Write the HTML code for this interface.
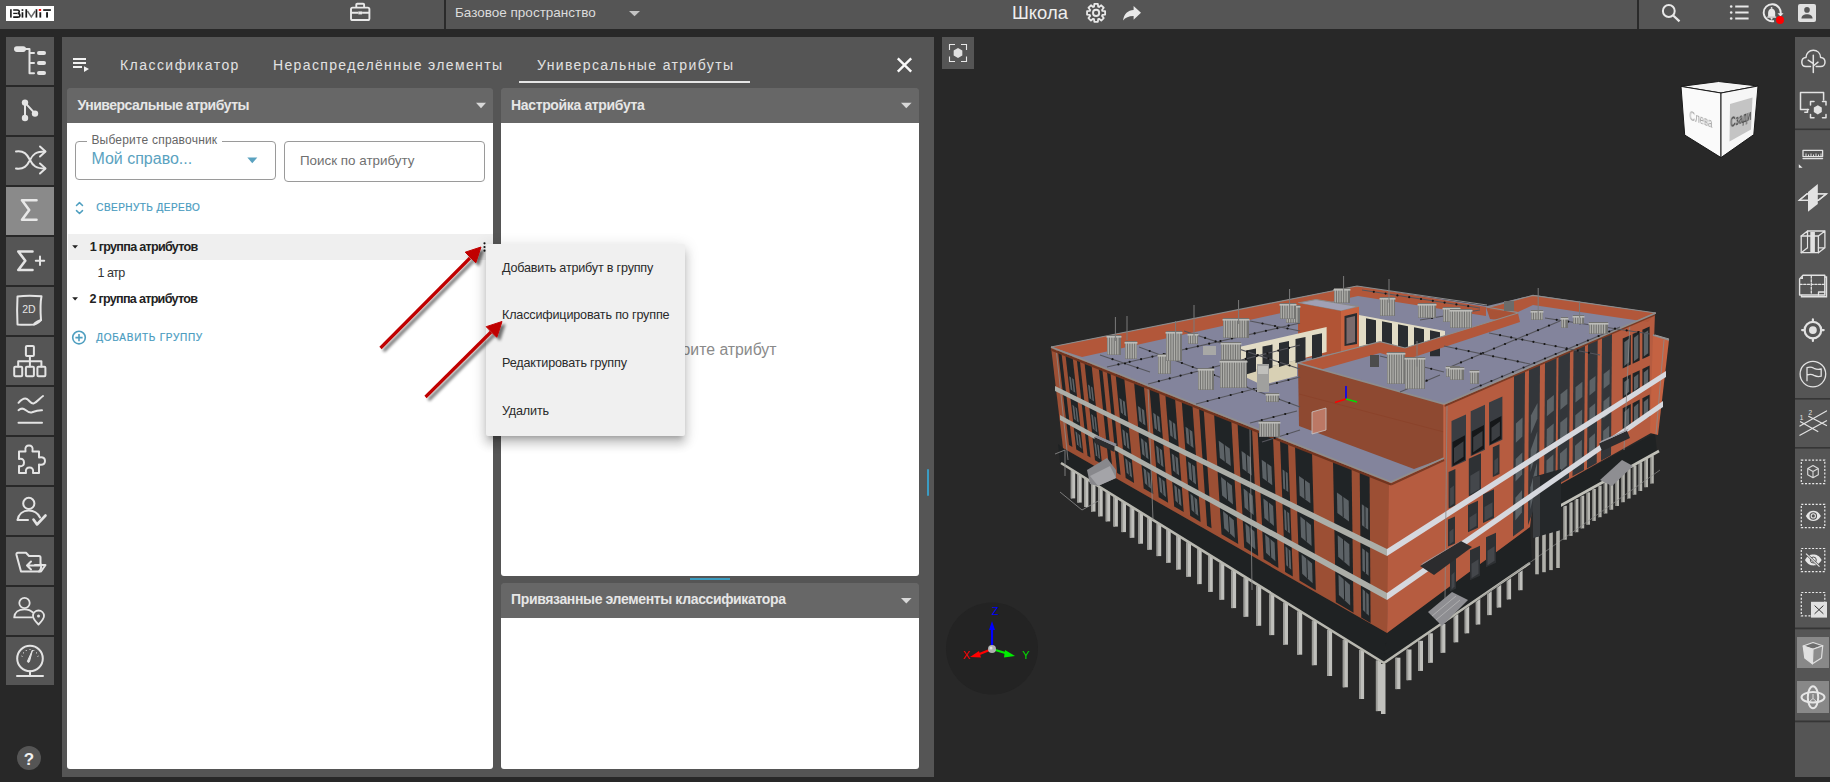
<!DOCTYPE html>
<html><head><meta charset="utf-8">
<style>
*{margin:0;padding:0;box-sizing:border-box}
html,body{width:1830px;height:782px;overflow:hidden;background:#282828;font-family:"Liberation Sans",sans-serif}
.a{position:absolute}
.t{position:absolute;white-space:nowrap;line-height:1}
svg{position:absolute;overflow:visible}
</style></head><body>
<!-- TOP BAR -->
<div class="a" style="left:0;top:0;width:1830px;height:29px;background:#555"></div>
<div class="a" style="left:6px;top:6px;width:48px;height:15px;background:#fff"></div>
<svg class="a" style="left:0;top:0" width="60" height="30"><g fill="#1a1a1a">
<rect x="10.1" y="9.2" width="1.6" height="8.4"/>
<rect x="21.6" y="9.2" width="1.7" height="1.7"/><rect x="21.6" y="12.2" width="1.7" height="5.4"/>
<rect x="25.4" y="9.2" width="1.7" height="8.4"/><rect x="35.6" y="9.2" width="1.7" height="8.4"/>
<rect x="39.4" y="12.2" width="1.8" height="5.4"/>
<rect x="43.2" y="9.2" width="7.7" height="1.7"/><rect x="46.1" y="12.2" width="1.9" height="5.4"/>
</g>
<path d="M13.2 10 H17.2 C18.6 10 19.3 10.8 19.3 11.8 C19.3 12.7 18.7 13.3 17.6 13.4 C18.9 13.5 19.9 14.3 19.9 15.4 C19.9 16.6 19 17.1 17.6 17.1 H13.2" fill="none" stroke="#1a1a1a" stroke-width="1.6"/>
<path d="M13.2 13.4 H17.3" stroke="#1a1a1a" stroke-width="1.3"/>
<path d="M27.4 11 L31.3 17 L35.2 11" fill="none" stroke="#6a6a6a" stroke-width="1.4"/>
<rect x="38.8" y="9" width="2.3" height="1.9" fill="#ff0000"/></svg>
<div class="a" style="left:444px;top:0;width:2px;height:29px;background:#2a2a2a"></div>
<div class="a" style="left:1637px;top:0;width:2px;height:29px;background:#2a2a2a"></div>
<div class="t" style="left:455px;top:5.9px;font-size:13.5px;color:#dcdcdc">Базовое пространство</div>
<div class="t" style="left:1012px;top:3.8px;font-size:18.4px;color:#eee">Школа</div>

<svg class="a" style="left:0;top:0" width="1830" height="30" viewBox="0 0 1830 30">
<g fill="none" stroke="#e8e8e8" stroke-width="1.9" stroke-linejoin="round">
<rect x="351" y="7.6" width="18.4" height="12.4" rx="1.6"/>
<path d="M356.3 7.6 V4.6 C356.3 4.1 356.7 3.8 357.2 3.8 H363.2 C363.7 3.8 364.1 4.1 364.1 4.6 V7.6"/>
<path d="M351 12.8 H358.3 M362.1 12.8 H369.4"/>
</g>
<rect x="358.3" y="11.4" width="3.8" height="3" fill="#e8e8e8"/>
<polygon points="629,11 640,11 634.5,16.2" fill="#c4c4c4"/>
<path d="M1094.02 6.64 L1094.36 3.87 L1097.84 3.87 L1098.18 6.64 L1099.06 7.00 L1101.26 5.28 L1103.72 7.74 L1102.00 9.94 L1102.36 10.82 L1105.13 11.16 L1105.13 14.64 L1102.36 14.98 L1102.00 15.86 L1103.72 18.06 L1101.26 20.52 L1099.06 18.80 L1098.18 19.16 L1097.84 21.93 L1094.36 21.93 L1094.02 19.16 L1093.14 18.80 L1090.94 20.52 L1088.48 18.06 L1090.20 15.86 L1089.84 14.98 L1087.07 14.64 L1087.07 11.16 L1089.84 10.82 L1090.20 9.94 L1088.48 7.74 L1090.94 5.28 L1093.14 7.00 Z" fill="none" stroke="#e8e8e8" stroke-width="1.8" stroke-linejoin="round"/>
<circle cx="1096.1" cy="12.9" r="3.1" fill="none" stroke="#e8e8e8" stroke-width="1.9"/>
<path d="M1123 20.6 C1124 14 1128 10.2 1133.6 10.1 V6.1 L1141 12.8 L1133.6 19.7 V16.1 C1129 16 1125.5 17.5 1123 20.6 Z" fill="#e8e8e8"/>
<circle cx="1668.8" cy="11" r="5.9" fill="none" stroke="#e8e8e8" stroke-width="2"/>
<path d="M1673.2 15.5 L1679.5 21.3" stroke="#e8e8e8" stroke-width="2.3"/>
<circle cx="1731.2" cy="6.5" r="1.3" fill="#e8e8e8"/><circle cx="1731.2" cy="12.5" r="1.3" fill="#e8e8e8"/><circle cx="1731.2" cy="18.5" r="1.3" fill="#e8e8e8"/>
<path d="M1735.2 6.5 H1748.6 M1735.2 12.5 H1748.6 M1735.2 18.5 H1748.6" stroke="#e8e8e8" stroke-width="2"/>
<path d="M1780.5 14.5 A8.5 8.5 0 1 0 1774 21" fill="none" stroke="#e8e8e8" stroke-width="1.9"/>
<polygon points="1777.5,13.2 1783.5,13.2 1780.5,16.5" fill="#e8e8e8"/>
<path d="M1768.1 16.8 V12.8 C1768.1 10.5 1769.6 8.7 1771.6 8.5 C1773.8 8.7 1775.2 10.5 1775.2 12.8 V16.8 Z" fill="#e8e8e8"/>
<rect x="1767.2" y="16.5" width="9" height="1.2" fill="#e8e8e8"/>
<circle cx="1771.6" cy="7.9" r="0.9" fill="#e8e8e8"/><circle cx="1771.6" cy="18.6" r="1.1" fill="#e8e8e8"/>
<circle cx="1780" cy="20" r="4" fill="#ff0000"/>
<rect x="1798" y="4" width="18" height="18" rx="2" fill="#e0e0e0"/>
<circle cx="1807" cy="9.9" r="2.8" fill="#555"/>
<path d="M1801.4 18.5 C1801.6 15.4 1804.2 14.2 1807 14.2 C1809.8 14.2 1812.4 15.4 1812.6 18.5 Z" fill="#555"/>
</svg>
<!-- SIDEBAR -->
<div id="sb"><svg class="a" style="left:0;top:0" width="60" height="782" viewBox="0 0 60 782"><rect x="6" y="37" width="48" height="48" fill="#555"/><rect x="6" y="87" width="48" height="48" fill="#555"/><rect x="6" y="137" width="48" height="48" fill="#555"/><rect x="6" y="187" width="48" height="48" fill="#8a8a8a"/><rect x="6" y="237" width="48" height="48" fill="#555"/><rect x="6" y="287" width="48" height="48" fill="#555"/><rect x="6" y="337" width="48" height="48" fill="#555"/><rect x="6" y="387" width="48" height="48" fill="#555"/><rect x="6" y="437" width="48" height="48" fill="#555"/><rect x="6" y="487" width="48" height="48" fill="#555"/><rect x="6" y="537" width="48" height="48" fill="#555"/><rect x="6" y="587" width="48" height="48" fill="#555"/><rect x="6" y="637" width="48" height="48" fill="#555"/><g transform="translate(6,37)"><rect x="8" y="9.3" width="12" height="5.6" rx="2.8" fill="#e4e4e4"/>
<path d="M19 12.1 H23.5 V36.2 H28 M23.5 16 H28 M23.5 26 H28" fill="none" stroke="#e4e4e4" stroke-width="2" stroke-linecap="round" stroke-linejoin="round" stroke-linecap="butt"/>
<rect x="31" y="14" width="9" height="4" rx="2" fill="#e4e4e4"/>
<rect x="31" y="24" width="9" height="4" rx="2" fill="#e4e4e4"/>
<rect x="31" y="34" width="9" height="4" rx="2" fill="#e4e4e4"/></g><g transform="translate(6,87)"><path d="M19 15.6 V31 M19 15.6 L29 26.6" fill="none" stroke="#e4e4e4" stroke-width="2" stroke-linecap="round" stroke-linejoin="round"/>
<circle cx="19" cy="15.6" r="3.2" fill="#e4e4e4"/><circle cx="19" cy="31" r="3.2" fill="#e4e4e4"/><circle cx="29" cy="26.6" r="3.2" fill="#e4e4e4"/></g><g transform="translate(6,137)"><path d="M10 14.5 C18 13.5 21 17 24 23 C27 29 30 31.5 39 31.5 M10 31.5 C18 32.5 21 29 24 23 C27 17 30 14.5 39 14.5" fill="none" stroke="#e4e4e4" stroke-width="2" stroke-linecap="round" stroke-linejoin="round"/>
<path d="M34 9.5 L39.5 14.5 L34 19.5 M34 26.5 L39.5 31.5 L34 36.5" fill="none" stroke="#e4e4e4" stroke-width="2" stroke-linecap="round" stroke-linejoin="round"/></g><g transform="translate(6,187)"><path d="M30.5 13.3 H16 L23.2 23 L16 32.7 H30.5" fill="none" stroke="#e8e8e8" stroke-width="2.6" stroke-linecap="round" stroke-linejoin="round"/></g><g transform="translate(6,237)"><path d="M26.5 14.5 H12.3 L19.3 23.7 L12.3 33 H26.5" fill="none" stroke="#e4e4e4" stroke-width="2.6" stroke-linecap="round" stroke-linejoin="round"/>
<path d="M34 19.5 V28 M29.8 23.7 H38.2" fill="none" stroke="#e4e4e4" stroke-width="2" stroke-linecap="round" stroke-linejoin="round"/></g><g transform="translate(6,287)"><path d="M11.5 9.5 C18 8.5 28 8.6 35.5 9.2 C34.5 14 34.5 26 35 33 C33 35 31 37 28 37.5 C22 37.8 16 37.8 11.5 37.5 C11 28 11 18 11.5 9.5 Z" fill="none" stroke="#e4e4e4" stroke-width="2" stroke-linecap="round" stroke-linejoin="round" stroke-width="1.8"/>
<path d="M28 37.5 C29 35 31 34.5 35 33" fill="none" stroke="#e4e4e4" stroke-width="2" stroke-linecap="round" stroke-linejoin="round" stroke-width="1.6"/>
<text x="23" y="26.3" font-family="Liberation Sans" font-size="10.5" fill="#e4e4e4" text-anchor="middle">2D</text></g><g transform="translate(6,337)"><rect x="19.9" y="9" width="8" height="10" rx="1" fill="none" stroke="#e4e4e4" stroke-width="2" stroke-linecap="round" stroke-linejoin="round" stroke-width="1.7"/>
<path d="M23.9 19 V24.2 M12.2 29.5 V24.2 H35.4 V29.5 M23.9 24.2 V29.5" fill="none" stroke="#e4e4e4" stroke-width="2" stroke-linecap="round" stroke-linejoin="round" stroke-width="1.7"/>
<rect x="8.2" y="29.8" width="8" height="9.4" rx="1" fill="none" stroke="#e4e4e4" stroke-width="2" stroke-linecap="round" stroke-linejoin="round" stroke-width="1.7"/>
<rect x="19.9" y="29.8" width="8" height="9.4" rx="1" fill="none" stroke="#e4e4e4" stroke-width="2" stroke-linecap="round" stroke-linejoin="round" stroke-width="1.7"/>
<rect x="31.4" y="29.8" width="8" height="9.4" rx="1" fill="none" stroke="#e4e4e4" stroke-width="2" stroke-linecap="round" stroke-linejoin="round" stroke-width="1.7"/></g><g transform="translate(6,387)"><path d="M12.5 15.8 C15 13 18 10.5 21 12 C24 14 25 17 27.5 16.5 C31 15.5 34 11 37 9" fill="none" stroke="#e4e4e4" stroke-width="2" stroke-linecap="round" stroke-linejoin="round"/>
<path d="M12.5 23.2 C14.5 21.5 17 21 19.5 23 C22 25 23.5 26 26 25.3 C29 24.2 33 23.2 36 23.3" fill="none" stroke="#e4e4e4" stroke-width="2" stroke-linecap="round" stroke-linejoin="round"/>
<path d="M12.5 35.8 H36" fill="none" stroke="#e4e4e4" stroke-width="2" stroke-linecap="round" stroke-linejoin="round"/></g><g transform="translate(6,437)"><path d="M13 14.5 H19.5 C18.5 9.5 21 8.5 23 8.5 C25 8.5 27.5 9.5 26.5 14.5 H33 V20.5 C38 19.5 39 22 39 24 C39 26 38 28.5 33 27.5 V36 H27 C28 31.5 25.5 30.5 23.5 30.5 C21.5 30.5 19 31.5 20 36 H13 V29 C17 30 18 27.5 18 25.5 C18 23.5 17 21 13 22 Z" fill="none" stroke="#e4e4e4" stroke-width="2" stroke-linecap="round" stroke-linejoin="round" stroke-width="1.8"/></g><g transform="translate(6,487)"><circle cx="22.8" cy="16.4" r="5.6" fill="none" stroke="#e4e4e4" stroke-width="2" stroke-linecap="round" stroke-linejoin="round" stroke-width="1.8"/>
<path d="M11.6 33 C12.5 27 17 23.5 22.8 23.5 C28 23.5 32 26.5 34 30.5" fill="none" stroke="#e4e4e4" stroke-width="2" stroke-linecap="round" stroke-linejoin="round" stroke-width="1.8"/>
<path d="M11.6 33 H22" fill="none" stroke="#e4e4e4" stroke-width="2" stroke-linecap="round" stroke-linejoin="round" stroke-width="1.8"/>
<path d="M27.5 32.5 L31 37.5 L39.5 28.5" fill="none" stroke="#e4e4e4" stroke-width="2.6" stroke-linecap="round" stroke-linejoin="round"/></g><g transform="translate(6,537)"><path d="M15 34.5 L10.5 18 C10.2 16.5 10.8 15.8 12 15.8 H20 L23 19 H33 C34 19 34.5 19.5 34.5 20.5 V27 M15 34.5 H35 L39.5 28 H29" fill="none" stroke="#e4e4e4" stroke-width="2" stroke-linecap="round" stroke-linejoin="round" stroke-width="1.8"/>
<path d="M35 27.5 C35.5 30 35 32.5 33 34.5" fill="none" stroke="#e4e4e4" stroke-width="2" stroke-linecap="round" stroke-linejoin="round" stroke-width="1.5"/>
<path d="M34 28.5 H21 M25 24.5 L21 28.5 L25 32.5" fill="none" stroke="#e4e4e4" stroke-width="2" stroke-linecap="round" stroke-linejoin="round" stroke-width="1.8"/></g><g transform="translate(6,587)"><circle cx="18.5" cy="16" r="5.2" fill="none" stroke="#e4e4e4" stroke-width="1.8" stroke-linecap="round" stroke-linejoin="round"/>
<path d="M8.2 30.4 C8.5 25.5 12.5 22.3 18.5 22.3 C22 22.3 25 23.5 27 25.5 M8.2 30.4 H26" fill="none" stroke="#e4e4e4" stroke-width="1.8" stroke-linecap="round" stroke-linejoin="round"/>
<path d="M32.5 37.5 C29 34 27 31.8 27 29 C27 25.8 29.5 23.5 32.5 23.5 C35.5 23.5 38 25.8 38 29 C38 31.8 36 34 32.5 37.5 Z" fill="none" stroke="#e4e4e4" stroke-width="1.8" stroke-linecap="round" stroke-linejoin="round"/>
<circle cx="32.5" cy="29" r="1.5" fill="#e4e4e4"/></g><g transform="translate(6,637)"><circle cx="24" cy="21.5" r="12.8" fill="none" stroke="#e4e4e4" stroke-width="2" stroke-linecap="round" stroke-linejoin="round" stroke-width="2"/>
<path d="M24 34.3 V38.5 M11 39 H37" fill="none" stroke="#e4e4e4" stroke-width="2" stroke-linecap="round" stroke-linejoin="round" stroke-width="2"/>
<path d="M26.5 13 L23.5 24.5 C23.2 26 21 25.5 21.5 24 Z" fill="#e4e4e4" stroke="#e4e4e4" stroke-width="1" stroke-linejoin="round"/>
<path d="M15.5 19 L16.5 19.5 M17 15.5 L18 16.3 M20 13 L20.5 14 M24 12 V13 M28 13 L27.6 14 M31 15.5 L30 16.3 M32.5 19 L31.5 19.5" stroke="#e4e4e4" stroke-width="1"/></g><circle cx="29" cy="758" r="12" fill="#555"/><text x="29" y="764.5" font-family="Liberation Sans" font-weight="700" font-size="17" fill="#f0f0f0" text-anchor="middle">?</text></svg></div>

<!-- MAIN PANEL -->
<div class="a" style="left:62px;top:37px;width:872px;height:740px;background:#555"></div>
<div class="t" style="left:120px;top:57.9px;font-size:14px;color:#e2e2e2;letter-spacing:1.45px">Классификатор</div>
<div class="t" style="left:273px;top:57.9px;font-size:14px;color:#e2e2e2;letter-spacing:1.36px">Нераспределённые элементы</div>
<div class="t" style="left:537px;top:57.9px;font-size:14px;color:#e2e2e2;letter-spacing:1.38px">Универсальные атрибуты</div>
<div class="a" style="left:519px;top:81px;width:231px;height:2px;background:#e6e6e6"></div>

<!-- left subpanel -->
<div class="a" style="left:67px;top:88px;width:426px;height:681px;background:linear-gradient(#676767 35px,#fff 35px);border-radius:4px 4px 3px 3px;overflow:hidden">
  <div class="a" style="left:0;top:0;width:426px;height:35px;background:#676767"></div>
</div>
<div class="t" style="left:77.6px;top:98.2px;font-size:14px;font-weight:700;color:#e6e6e6;letter-spacing:-0.5px">Универсальные атрибуты</div>

<!-- right subpanel top -->
<div class="a" style="left:501px;top:88px;width:418px;height:488px;background:linear-gradient(#676767 35px,#fff 35px);border-radius:4px 4px 3px 3px;overflow:hidden">
  <div class="a" style="left:0;top:0;width:418px;height:35px;background:#676767"></div>
</div>
<div class="t" style="left:511px;top:98.2px;font-size:14px;font-weight:700;color:#e6e6e6;letter-spacing:-0.35px">Настройка атрибута</div>
<div class="a" style="left:690px;top:578px;width:40px;height:2px;background:#3a9cc0"></div>

<!-- right subpanel bottom -->
<div class="a" style="left:501px;top:583px;width:418px;height:186px;background:linear-gradient(#676767 35px,#fff 35px);border-radius:4px 4px 3px 3px;overflow:hidden">
  <div class="a" style="left:0;top:0;width:418px;height:35px;background:#676767"></div>
</div>
<div class="t" style="left:511px;top:592.2px;font-size:14px;font-weight:700;color:#e6e6e6;letter-spacing:-0.36px">Привязанные элементы классификатора</div>


<!-- left content -->
<div class="a" style="left:75px;top:140.5px;width:201px;height:39px;border:1px solid #9a9a9a;border-radius:4px"></div>
<div class="a" style="left:87px;top:136px;width:135px;height:8px;background:#fff"></div>
<div class="t" style="left:91.4px;top:133.5px;font-size:12px;color:#666;letter-spacing:0.2px">Выберите справочник</div>
<div class="t" style="left:91.4px;top:151.3px;font-size:16px;color:#5aa2c0">Мой справо...</div>
<svg class="a" style="left:0;top:0" width="10" height="10"><polygon points="247.3,157.5 257.3,157.5 252.3,163.2" fill="#5aa2c0"/></svg>
<div class="a" style="left:284px;top:140.5px;width:201px;height:41px;border:1px solid #9a9a9a;border-radius:4px"></div>
<div class="t" style="left:300px;top:154.1px;font-size:13.4px;color:#707070">Поиск по атрибуту</div>
<svg class="a" style="left:0;top:0" width="10" height="10"><path d="M76.5 205.5 L79.5 202.6 L82.5 205.5 M76.5 210.6 L79.5 213.5 L82.5 210.6" fill="none" stroke="#4f9fc0" stroke-width="1.5" stroke-linecap="round" stroke-linejoin="round"/></svg>
<div class="t" style="left:96.3px;top:202.5px;font-size:10px;color:#4a9cbf;letter-spacing:0.45px;-webkit-text-stroke:0.2px #4a9cbf">СВЕРНУТЬ ДЕРЕВО</div>
<div class="a" style="left:68px;top:234px;width:425px;height:26px;background:#efefef"></div>
<svg class="a" style="left:0;top:0" width="10" height="10"><polygon points="72.2,245.3 78,245.3 75.1,248.5" fill="#222"/><polygon points="72.2,297.3 78,297.3 75.1,300.5" fill="#222"/>
<circle cx="484.5" cy="243.3" r="1.1" fill="#111"/><circle cx="484.5" cy="247" r="1.1" fill="#111"/><circle cx="484.5" cy="250.7" r="1.1" fill="#111"/>
<circle cx="79" cy="337.6" r="6.3" fill="none" stroke="#4f9fc0" stroke-width="1.6"/><path d="M79 334 V341.2 M75.4 337.6 H82.6" stroke="#4f9fc0" stroke-width="1.6"/></svg>
<div class="t" style="left:89.7px;top:240.8px;font-size:12.6px;font-weight:700;color:#222;letter-spacing:-0.72px">1 группа атрибутов</div>
<div class="t" style="left:97.6px;top:266.6px;font-size:12.6px;color:#333;letter-spacing:-0.6px">1 атр</div>
<div class="t" style="left:89.4px;top:292.6px;font-size:12.6px;font-weight:700;color:#222;letter-spacing:-0.72px">2 группа атрибутов</div>
<div class="t" style="left:96.3px;top:333.1px;font-size:10px;color:#4a9cbf;letter-spacing:0.72px;-webkit-text-stroke:0.2px #4a9cbf">ДОБАВИТЬ ГРУППУ</div>
<div class="t" style="left:642px;top:341.6px;font-size:15.8px;color:#8a8a8a">Выберите атрибут</div>
<svg class="a" style="left:0;top:0" width="10" height="10"><polygon points="476,102.8 486,102.8 481,108.2" fill="#d8d8d8"/><polygon points="901,102.8 911.6,102.8 906.3,108.2" fill="#d8d8d8"/><polygon points="901,598 911.6,598 906.3,603.4" fill="#d8d8d8"/>
<path d="M897.8 58.4 L911.2 71.6 M911.2 58.4 L897.8 71.6" stroke="#fafafa" stroke-width="2.4"/>
<rect x="73" y="58" width="13" height="2" fill="#f2f2f2"/><rect x="73" y="62" width="13" height="2" fill="#f2f2f2"/><rect x="73" y="66" width="9" height="2" fill="#f2f2f2"/><polygon points="84,66.2 89,69 84,71.9" fill="#f2f2f2"/>
</svg>
<div class="a" style="left:927px;top:469px;width:2.2px;height:27px;background:#3a9cc4;border-radius:1px"></div>
<!-- context menu -->
<div class="a" style="left:486px;top:244px;width:199px;height:192px;background:#f0f0f0;box-shadow:0 5px 5px -3px rgba(0,0,0,.2),0 8px 10px 1px rgba(0,0,0,.14),0 3px 14px 2px rgba(0,0,0,.12);border-radius:2px"></div>
<div class="t" style="left:502px;top:261.7px;font-size:12.6px;color:#2a2a2a;letter-spacing:-0.2px">Добавить атрибут в группу</div>
<div class="t" style="left:502px;top:309.4px;font-size:12.6px;color:#2a2a2a;letter-spacing:-0.17px">Классифицировать по группе</div>
<div class="t" style="left:502px;top:357.4px;font-size:12.6px;color:#2a2a2a;letter-spacing:-0.17px">Редактировать группу</div>
<div class="t" style="left:502px;top:405.4px;font-size:12.6px;color:#2a2a2a;letter-spacing:-0.17px">Удалить</div>
<!-- arrows -->
<svg class="a" style="left:0;top:0" width="1000" height="500">
<defs><filter id="sh" x="-20%" y="-20%" width="140%" height="140%"><feGaussianBlur in="SourceAlpha" stdDeviation="1.6"/><feOffset dx="3" dy="3"/><feComponentTransfer><feFuncA type="linear" slope="0.55"/></feComponentTransfer><feMerge><feMergeNode/><feMergeNode in="SourceGraphic"/></feMerge></filter></defs>
<g filter="url(#sh)" fill="#c00000" stroke="#c00000">
<path d="M380.5 348 L470 258" stroke-width="3.2" fill="none"/>
<polygon points="481,247 475.8,262.8 465.2,252.2" stroke-width="1"/>
<path d="M425.5 397 L491 332" stroke-width="3.2" fill="none"/>
<polygon points="502,321.5 496.8,337.3 486.2,326.7" stroke-width="1"/>
</g></svg>

<!-- VIEWER -->
<svg class="a" style="left:0;top:0" width="1830" height="782" viewBox="0 0 1830 782">
<rect x="942" y="37" width="32" height="32" fill="#555"/>
<path d="M949.5 50 V44.5 H955 M961 44.5 H966.5 V50 M966.5 56.5 V61.5 H961 M955 61.5 H949.5 V56.5" fill="none" stroke="#e8e8e8" stroke-width="1.1"/>
<polygon points="958.00,58.00 953.67,55.50 953.67,50.50 958.00,48.00 962.33,50.50 962.33,55.50" fill="#e0e0e0"/>
<!-- view cube -->
<g stroke="#1a1a1a" stroke-width="1" stroke-linejoin="round">
<polygon points="1681,86.4 1718.6,81.5 1758,86 1721,93" fill="#f4f4f4"/>
<polygon points="1681,86.4 1721,93 1721,157.6 1684.7,135" fill="#fafafa"/>
<polygon points="1721,93 1758,86 1753.8,134.6 1721,157.6" fill="#f6f6f6"/>
</g>
<polygon points="1730,104 1752.5,97.5 1751,129.5 1729.5,141.6" fill="#c4c4c4"/>
<defs><filter id="bl1"><feGaussianBlur stdDeviation="0.35"/></filter><filter id="bl2"><feGaussianBlur stdDeviation="0.6"/></filter></defs><text x="0" y="0" font-family="Liberation Sans" font-size="9.5" fill="#9a9a9a" filter="url(#bl1)" transform="matrix(0.82,0.3,0,1.3,1689.5,119.5)">Слева</text>
<text x="0" y="0" font-family="Liberation Sans" font-weight="700" font-size="12" fill="#4a4a4a" filter="url(#bl2)" transform="matrix(0.58,-0.22,0,1.2,1730.5,127.5)">Сзади</text>
<!-- axes gizmo -->
<circle cx="992" cy="648.5" r="46" fill="#232323"/>
<path d="M992 649 V627" stroke="#0000ff" stroke-width="2.2"/>
<polygon points="992,621 995,630 989,630" fill="#0000ff"/>
<path d="M992 649 L977 655" stroke="#ff0000" stroke-width="2.2"/>
<polygon points="970,657 979,651 981,657.5" fill="#ff0000"/>
<path d="M992 649 L1007 653.5" stroke="#00ee00" stroke-width="2.2"/>
<polygon points="1015,656 1005,650 1004,657.5" fill="#00ee00"/>
<circle cx="992" cy="649" r="4" fill="#b0b0b0"/>
<circle cx="991" cy="648" r="1.5" fill="#e0e0e0"/>
<text x="995" y="615" font-family="Liberation Sans" font-size="11" fill="#0000ff" text-anchor="middle">Z</text>
<text x="966.5" y="659" font-family="Liberation Sans" font-size="11" fill="#ff0000" text-anchor="middle">X</text>
<text x="1026" y="658.5" font-family="Liberation Sans" font-size="11" fill="#00dd00" text-anchor="middle">Y</text>
<!-- BUILDING -->
<g id="bld"><rect x="1070.8" y="470.4" width="4.4" height="28.0" fill="#c0c0bc" />
<rect x="1070.8" y="470.4" width="1.5" height="28.0" fill="#9a9a96" />
<rect x="1077.3" y="474.4" width="4.4" height="28.2" fill="#c0c0bc" />
<rect x="1077.3" y="474.4" width="1.5" height="28.2" fill="#9a9a96" />
<rect x="1084.0" y="478.6" width="4.4" height="28.4" fill="#c0c0bc" />
<rect x="1084.0" y="478.6" width="1.6" height="28.4" fill="#9a9a96" />
<rect x="1091.0" y="482.9" width="4.5" height="28.7" fill="#c0c0bc" />
<rect x="1091.0" y="482.9" width="1.6" height="28.7" fill="#9a9a96" />
<rect x="1098.2" y="487.4" width="4.5" height="29.0" fill="#c0c0bc" />
<rect x="1098.2" y="487.4" width="1.6" height="29.0" fill="#9a9a96" />
<rect x="1105.7" y="492.1" width="4.5" height="29.3" fill="#c0c0bc" />
<rect x="1105.7" y="492.1" width="1.6" height="29.3" fill="#9a9a96" />
<rect x="1113.4" y="496.9" width="4.5" height="29.7" fill="#c0c0bc" />
<rect x="1113.4" y="496.9" width="1.6" height="29.7" fill="#9a9a96" />
<rect x="1121.5" y="501.9" width="4.5" height="30.2" fill="#c0c0bc" />
<rect x="1121.5" y="501.9" width="1.6" height="30.2" fill="#9a9a96" />
<rect x="1129.8" y="507.1" width="4.6" height="30.7" fill="#c0c0bc" />
<rect x="1129.8" y="507.1" width="1.6" height="30.7" fill="#9a9a96" />
<rect x="1138.4" y="512.5" width="4.6" height="31.2" fill="#c0c0bc" />
<rect x="1138.4" y="512.5" width="1.6" height="31.2" fill="#9a9a96" />
<rect x="1147.3" y="518.1" width="4.6" height="31.7" fill="#c0c0bc" />
<rect x="1147.3" y="518.1" width="1.6" height="31.7" fill="#9a9a96" />
<rect x="1156.6" y="523.8" width="4.6" height="32.3" fill="#c0c0bc" />
<rect x="1156.6" y="523.8" width="1.6" height="32.3" fill="#9a9a96" />
<rect x="1166.1" y="529.8" width="4.6" height="33.0" fill="#c0c0bc" />
<rect x="1166.1" y="529.8" width="1.6" height="33.0" fill="#9a9a96" />
<rect x="1176.1" y="536.0" width="4.7" height="33.6" fill="#c0c0bc" />
<rect x="1176.1" y="536.0" width="1.6" height="33.6" fill="#9a9a96" />
<rect x="1186.3" y="542.4" width="4.7" height="34.4" fill="#c0c0bc" />
<rect x="1186.3" y="542.4" width="1.6" height="34.4" fill="#9a9a96" />
<rect x="1197.0" y="549.0" width="4.7" height="35.1" fill="#c0c0bc" />
<rect x="1197.0" y="549.0" width="1.7" height="35.1" fill="#9a9a96" />
<rect x="1208.0" y="555.9" width="4.8" height="36.0" fill="#c0c0bc" />
<rect x="1208.0" y="555.9" width="1.7" height="36.0" fill="#9a9a96" />
<rect x="1219.5" y="563.0" width="4.8" height="36.8" fill="#c0c0bc" />
<rect x="1219.5" y="563.0" width="1.7" height="36.8" fill="#9a9a96" />
<rect x="1231.3" y="570.4" width="4.8" height="37.7" fill="#c0c0bc" />
<rect x="1231.3" y="570.4" width="1.7" height="37.7" fill="#9a9a96" />
<rect x="1243.6" y="578.1" width="4.8" height="38.7" fill="#c0c0bc" />
<rect x="1243.6" y="578.1" width="1.7" height="38.7" fill="#9a9a96" />
<rect x="1256.3" y="586.0" width="4.9" height="39.8" fill="#c0c0bc" />
<rect x="1256.3" y="586.0" width="1.7" height="39.8" fill="#9a9a96" />
<rect x="1269.4" y="594.2" width="4.9" height="40.9" fill="#c0c0bc" />
<rect x="1269.4" y="594.2" width="1.7" height="40.9" fill="#9a9a96" />
<rect x="1283.1" y="602.7" width="4.9" height="42.0" fill="#c0c0bc" />
<rect x="1283.1" y="602.7" width="1.7" height="42.0" fill="#9a9a96" />
<rect x="1297.2" y="611.5" width="5.0" height="43.2" fill="#c0c0bc" />
<rect x="1297.2" y="611.5" width="1.7" height="43.2" fill="#9a9a96" />
<rect x="1311.9" y="620.7" width="5.0" height="44.5" fill="#c0c0bc" />
<rect x="1311.9" y="620.7" width="1.8" height="44.5" fill="#9a9a96" />
<rect x="1327.0" y="630.1" width="5.1" height="45.9" fill="#c0c0bc" />
<rect x="1327.0" y="630.1" width="1.8" height="45.9" fill="#9a9a96" />
<rect x="1342.8" y="639.9" width="5.1" height="47.4" fill="#c0c0bc" />
<rect x="1342.8" y="639.9" width="1.8" height="47.4" fill="#9a9a96" />
<rect x="1359.0" y="650.1" width="5.1" height="48.9" fill="#c0c0bc" />
<rect x="1359.0" y="650.1" width="1.8" height="48.9" fill="#9a9a96" />
<rect x="1375.9" y="660.6" width="5.2" height="50.5" fill="#c0c0bc" />
<rect x="1375.9" y="660.6" width="1.8" height="50.5" fill="#9a9a96" />
<rect x="1395.5" y="657.7" width="4.9" height="31.4" fill="#c0c0bc" />
<rect x="1395.5" y="657.7" width="1.7" height="31.4" fill="#9a9a96" />
<rect x="1406.6" y="649.5" width="4.9" height="30.7" fill="#c0c0bc" />
<rect x="1406.6" y="649.5" width="1.7" height="30.7" fill="#9a9a96" />
<rect x="1418.2" y="640.8" width="4.8" height="30.1" fill="#c0c0bc" />
<rect x="1418.2" y="640.8" width="1.7" height="30.1" fill="#9a9a96" />
<rect x="1428.1" y="633.3" width="4.8" height="29.5" fill="#c0c0bc" />
<rect x="1428.1" y="633.3" width="1.7" height="29.5" fill="#9a9a96" />
<rect x="1440.7" y="624.0" width="4.7" height="28.8" fill="#c0c0bc" />
<rect x="1440.7" y="624.0" width="1.6" height="28.8" fill="#9a9a96" />
<rect x="1453.7" y="614.2" width="4.6" height="28.1" fill="#c0c0bc" />
<rect x="1453.7" y="614.2" width="1.6" height="28.1" fill="#9a9a96" />
<rect x="1464.7" y="605.9" width="4.5" height="27.4" fill="#c0c0bc" />
<rect x="1464.7" y="605.9" width="1.6" height="27.4" fill="#9a9a96" />
<rect x="1475.8" y="597.7" width="4.5" height="26.8" fill="#c0c0bc" />
<rect x="1475.8" y="597.7" width="1.6" height="26.8" fill="#9a9a96" />
<rect x="1487.3" y="589.0" width="4.4" height="26.1" fill="#c0c0bc" />
<rect x="1487.3" y="589.0" width="1.5" height="26.1" fill="#9a9a96" />
<rect x="1496.8" y="581.9" width="4.4" height="25.6" fill="#c0c0bc" />
<rect x="1496.8" y="581.9" width="1.5" height="25.6" fill="#9a9a96" />
<rect x="1506.8" y="574.4" width="4.3" height="25.0" fill="#c0c0bc" />
<rect x="1506.8" y="574.4" width="1.5" height="25.0" fill="#9a9a96" />
<rect x="1518.4" y="565.8" width="4.2" height="24.4" fill="#c0c0bc" />
<rect x="1518.4" y="565.8" width="1.5" height="24.4" fill="#9a9a96" />
<rect x="1381.0" y="664.0" width="4.5" height="50.0" fill="#c0c0bc" />
<polygon points="1058.0,444.0 1063.0,448.0 1387.0,633.0 1384.0,664.0 1066.0,466.0 1060.0,462.0" fill="#1f2223" />
<polygon points="1387.0,633.0 1530.0,527.0 1532.0,564.0 1384.0,664.0" fill="#1f2223" />
<polyline points="1061.0,463.0 1384.0,663.0 1530.0,563.0" fill="none" stroke="#b8b8b0" stroke-width="2.6" />
<rect x="1563.2" y="505.7" width="3.6" height="34.0" fill="#b4b4ae" />
<rect x="1563.2" y="505.7" width="1.2" height="34.0" fill="#7c7c78" />
<rect x="1569.0" y="502.3" width="3.6" height="33.6" fill="#b4b4ae" />
<rect x="1569.0" y="502.3" width="1.2" height="33.6" fill="#7c7c78" />
<rect x="1574.8" y="499.0" width="3.6" height="33.2" fill="#b4b4ae" />
<rect x="1574.8" y="499.0" width="1.2" height="33.2" fill="#7c7c78" />
<rect x="1580.6" y="495.6" width="3.6" height="32.8" fill="#b4b4ae" />
<rect x="1580.6" y="495.6" width="1.2" height="32.8" fill="#7c7c78" />
<rect x="1586.4" y="492.3" width="3.6" height="32.4" fill="#b4b4ae" />
<rect x="1586.4" y="492.3" width="1.2" height="32.4" fill="#7c7c78" />
<rect x="1592.2" y="488.9" width="3.6" height="32.0" fill="#b4b4ae" />
<rect x="1592.2" y="488.9" width="1.2" height="32.0" fill="#7c7c78" />
<rect x="1598.0" y="485.6" width="3.6" height="31.6" fill="#b4b4ae" />
<rect x="1598.0" y="485.6" width="1.2" height="31.6" fill="#7c7c78" />
<rect x="1603.8" y="482.3" width="3.6" height="31.2" fill="#b4b4ae" />
<rect x="1603.8" y="482.3" width="1.2" height="31.2" fill="#7c7c78" />
<rect x="1609.6" y="478.9" width="3.6" height="30.8" fill="#b4b4ae" />
<rect x="1609.6" y="478.9" width="1.2" height="30.8" fill="#7c7c78" />
<rect x="1615.4" y="475.6" width="3.6" height="30.4" fill="#b4b4ae" />
<rect x="1615.4" y="475.6" width="1.2" height="30.4" fill="#7c7c78" />
<rect x="1621.2" y="472.2" width="3.6" height="30.0" fill="#b4b4ae" />
<rect x="1621.2" y="472.2" width="1.2" height="30.0" fill="#7c7c78" />
<rect x="1627.0" y="468.9" width="3.6" height="29.6" fill="#b4b4ae" />
<rect x="1627.0" y="468.9" width="1.2" height="29.6" fill="#7c7c78" />
<rect x="1632.8" y="465.5" width="3.6" height="29.2" fill="#b4b4ae" />
<rect x="1632.8" y="465.5" width="1.2" height="29.2" fill="#7c7c78" />
<rect x="1638.6" y="462.2" width="3.6" height="28.8" fill="#b4b4ae" />
<rect x="1638.6" y="462.2" width="1.2" height="28.8" fill="#7c7c78" />
<rect x="1644.4" y="458.8" width="3.6" height="28.4" fill="#b4b4ae" />
<rect x="1644.4" y="458.8" width="1.2" height="28.4" fill="#7c7c78" />
<rect x="1650.2" y="455.5" width="3.6" height="28.0" fill="#b4b4ae" />
<rect x="1650.2" y="455.5" width="1.2" height="28.0" fill="#7c7c78" />
<polygon points="1561.0,484.0 1655.0,433.0 1657.0,452.0 1561.0,508.0" fill="#1f2223" />
<polyline points="1558.0,507.0 1659.0,451.0" fill="none" stroke="#c0c0b8" stroke-width="2.6" />
<polyline points="1480.0,598.0 1660.0,470.0" fill="none" stroke="#8a8a88" stroke-width="0.7" />
<polygon points="1051.0,347.0 1391.0,482.0 1387.0,633.0 1063.0,448.0" fill="#9c4f34" />
<polygon points="1058.0,351.3 1061.4,352.6 1072.4,447.1 1069.0,445.1" fill="#202426" />
<polygon points="1065.4,354.2 1072.6,357.1 1083.4,453.5 1076.3,449.4" fill="#202426" />
<polygon points="1069.1,376.2 1073.7,379.3 1075.3,392.7 1070.7,389.4" fill="#5c6266" />
<polyline points="1071.4,376.7 1073.0,391.1" fill="none" stroke="#202426" stroke-width="1" />
<polygon points="1072.4,404.7 1076.9,408.2 1078.7,422.6 1074.1,418.9" fill="#5c6266" />
<polyline points="1074.7,405.5 1076.4,420.8" fill="none" stroke="#202426" stroke-width="1" />
<polygon points="1075.4,431.3 1080.0,435.2 1081.6,448.7 1077.1,444.6" fill="#5c6266" />
<polyline points="1077.7,432.3 1079.3,446.6" fill="none" stroke="#202426" stroke-width="1" />
<polygon points="1076.7,358.7 1079.8,359.9 1090.5,457.6 1087.5,455.8" fill="#202426" />
<polygon points="1084.4,361.8 1091.5,364.6 1102.0,464.3 1095.0,460.2" fill="#202426" />
<polygon points="1088.0,384.4 1092.5,387.5 1094.1,401.5 1089.6,398.2" fill="#5c6266" />
<polyline points="1090.3,385.0 1091.9,399.8" fill="none" stroke="#202426" stroke-width="1" />
<polygon points="1091.2,414.0 1095.7,417.4 1097.4,432.4 1092.9,428.7" fill="#5c6266" />
<polyline points="1093.5,414.7 1095.2,430.5" fill="none" stroke="#202426" stroke-width="1" />
<polygon points="1094.2,441.5 1098.7,445.3 1100.2,459.3 1095.8,455.3" fill="#5c6266" />
<polyline points="1096.4,442.4 1098.0,457.3" fill="none" stroke="#202426" stroke-width="1" />
<polygon points="1098.7,367.4 1102.3,368.9 1112.6,470.4 1109.1,468.4" fill="#202426" />
<polygon points="1106.9,370.7 1110.4,372.1 1120.6,475.1 1117.2,473.1" fill="#202426" />
<polygon points="1115.6,374.1 1124.2,377.6 1134.1,482.9 1125.7,478.0" fill="#202426" />
<polygon points="1119.4,398.0 1124.8,401.7 1126.3,416.6 1120.9,412.6" fill="#5c6266" />
<polyline points="1122.1,398.9 1123.6,414.6" fill="none" stroke="#202426" stroke-width="1" />
<polygon points="1122.4,429.2 1127.8,433.4 1129.4,449.2 1124.0,444.8" fill="#5c6266" />
<polyline points="1125.1,430.3 1126.7,447.0" fill="none" stroke="#202426" stroke-width="1" />
<polygon points="1125.2,458.3 1130.6,462.9 1132.1,477.7 1126.7,472.8" fill="#5c6266" />
<polyline points="1127.9,459.6 1129.4,475.3" fill="none" stroke="#202426" stroke-width="1" />
<polygon points="1134.0,381.5 1143.8,385.3 1153.3,494.1 1143.7,488.5" fill="#202426" />
<polygon points="1137.9,406.0 1144.1,410.3 1145.5,425.6 1139.3,421.1" fill="#5c6266" />
<polyline points="1141.0,407.1 1142.4,423.3" fill="none" stroke="#202426" stroke-width="1" />
<polygon points="1140.8,438.1 1147.0,442.9 1148.5,459.3 1142.3,454.3" fill="#5c6266" />
<polyline points="1143.9,439.5 1145.4,456.8" fill="none" stroke="#202426" stroke-width="1" />
<polygon points="1143.5,468.1 1149.6,473.4 1151.1,488.7 1144.9,483.2" fill="#5c6266" />
<polyline points="1146.6,469.8 1148.0,485.9" fill="none" stroke="#202426" stroke-width="1" />
<polygon points="1149.4,387.6 1159.0,391.4 1168.1,502.8 1158.7,497.3" fill="#202426" />
<polygon points="1153.2,412.7 1159.3,416.9 1160.6,432.6 1154.6,428.2" fill="#5c6266" />
<polyline points="1156.2,413.8 1157.6,430.4" fill="none" stroke="#202426" stroke-width="1" />
<polygon points="1156.0,445.6 1162.0,450.3 1163.5,467.2 1157.5,462.2" fill="#5c6266" />
<polyline points="1159.0,447.0 1160.5,464.7" fill="none" stroke="#202426" stroke-width="1" />
<polygon points="1158.6,476.4 1164.6,481.5 1166.0,497.2 1160.0,491.8" fill="#5c6266" />
<polyline points="1161.6,478.0 1163.0,494.5" fill="none" stroke="#202426" stroke-width="1" />
<polygon points="1165.3,393.9 1175.0,397.7 1183.7,512.0 1174.2,506.4" fill="#202426" />
<polygon points="1169.0,419.6 1175.2,423.9 1176.5,440.0 1170.3,435.5" fill="#5c6266" />
<polyline points="1172.1,420.8 1173.4,437.8" fill="none" stroke="#202426" stroke-width="1" />
<polygon points="1171.7,453.4 1177.8,458.1 1179.2,475.4 1173.1,470.4" fill="#5c6266" />
<polyline points="1174.7,454.8 1176.1,472.9" fill="none" stroke="#202426" stroke-width="1" />
<polygon points="1174.2,484.9 1180.2,490.1 1181.5,506.2 1175.5,500.8" fill="#5c6266" />
<polyline points="1177.2,486.5 1178.5,503.5" fill="none" stroke="#202426" stroke-width="1" />
<polygon points="1181.7,400.4 1192.4,404.6 1200.6,521.9 1190.2,515.8" fill="#202426" />
<polygon points="1185.5,426.8 1192.3,431.4 1193.5,448.0 1186.8,443.1" fill="#5c6266" />
<polyline points="1188.9,428.1 1190.1,445.6" fill="none" stroke="#202426" stroke-width="1" />
<polygon points="1188.0,461.4 1194.8,466.6 1196.1,484.4 1189.4,478.9" fill="#5c6266" />
<polyline points="1191.4,463.0 1192.7,481.6" fill="none" stroke="#202426" stroke-width="1" />
<polygon points="1190.4,493.7 1197.1,499.4 1198.3,516.0 1191.6,510.0" fill="#5c6266" />
<polyline points="1193.7,495.6 1195.0,513.0" fill="none" stroke="#202426" stroke-width="1" />
<polygon points="1199.0,407.3 1203.7,409.1 1211.5,528.3 1207.0,525.7" fill="#202426" />
<polygon points="1214.0,413.2 1231.3,420.1 1238.2,544.1 1221.5,534.2" fill="#202426" />
<polygon points="1218.7,440.8 1229.7,448.4 1230.8,466.0 1219.9,458.0" fill="#5c6266" />
<polyline points="1224.2,443.6 1225.3,462.0" fill="none" stroke="#202426" stroke-width="1" />
<polygon points="1221.0,477.1 1231.9,485.6 1233.0,504.4 1222.2,495.5" fill="#5c6266" />
<polyline points="1226.4,480.4 1227.6,500.0" fill="none" stroke="#202426" stroke-width="1" />
<polygon points="1223.0,511.0 1233.8,520.3 1234.9,537.9 1224.2,528.2" fill="#5c6266" />
<polyline points="1228.4,514.7 1229.5,533.0" fill="none" stroke="#202426" stroke-width="1" />
<polygon points="1237.5,422.6 1252.0,428.3 1258.2,555.9 1244.2,547.6" fill="#202426" />
<polygon points="1241.6,451.1 1250.8,457.4 1251.7,475.5 1242.6,468.8" fill="#5c6266" />
<polyline points="1246.2,453.2 1247.1,472.2" fill="none" stroke="#202426" stroke-width="1" />
<polygon points="1243.6,488.6 1252.7,495.7 1253.7,515.1 1244.6,507.6" fill="#5c6266" />
<polyline points="1248.1,491.1 1249.1,511.3" fill="none" stroke="#202426" stroke-width="1" />
<polygon points="1245.4,523.6 1254.4,531.4 1255.4,549.5 1246.4,541.4" fill="#5c6266" />
<polyline points="1249.9,526.5 1250.9,545.5" fill="none" stroke="#202426" stroke-width="1" />
<polygon points="1257.6,430.5 1273.0,436.6 1278.4,567.9 1263.6,559.1" fill="#202426" />
<polygon points="1261.7,459.8 1271.4,466.5 1272.3,485.2 1262.6,478.1" fill="#5c6266" />
<polyline points="1266.6,462.2 1267.4,481.7" fill="none" stroke="#202426" stroke-width="1" />
<polygon points="1263.4,498.4 1273.1,505.9 1274.0,525.9 1264.4,518.0" fill="#5c6266" />
<polyline points="1268.3,501.1 1269.2,521.9" fill="none" stroke="#202426" stroke-width="1" />
<polygon points="1265.1,534.4 1274.6,542.7 1275.4,561.3 1266.0,552.7" fill="#5c6266" />
<polyline points="1269.9,537.5 1270.7,557.0" fill="none" stroke="#202426" stroke-width="1" />
<polygon points="1280.0,439.4 1288.0,442.6 1292.8,576.5 1285.1,571.9" fill="#202426" />
<polygon points="1282.6,469.6 1287.6,473.1 1288.3,492.1 1283.3,488.4" fill="#5c6266" />
<polyline points="1285.1,470.3 1285.8,490.3" fill="none" stroke="#202426" stroke-width="1" />
<polygon points="1284.1,509.3 1289.1,513.2 1289.9,533.6 1284.9,529.5" fill="#5c6266" />
<polyline points="1286.6,510.3 1287.4,531.6" fill="none" stroke="#202426" stroke-width="1" />
<polygon points="1285.5,546.4 1290.4,550.7 1291.2,569.8 1286.3,565.3" fill="#5c6266" />
<polyline points="1288.0,547.6 1288.7,567.5" fill="none" stroke="#202426" stroke-width="1" />
<polygon points="1295.0,445.4 1312.0,452.1 1315.8,590.2 1299.5,580.5" fill="#202426" />
<polygon points="1299.0,476.1 1309.8,483.5 1310.4,503.2 1299.7,495.4" fill="#5c6266" />
<polyline points="1304.4,478.8 1305.0,499.3" fill="none" stroke="#202426" stroke-width="1" />
<polygon points="1300.3,516.6 1311.0,524.9 1311.6,546.0 1301.1,537.2" fill="#5c6266" />
<polyline points="1305.7,519.8 1306.3,541.6" fill="none" stroke="#202426" stroke-width="1" />
<polygon points="1301.6,554.5 1312.1,563.6 1312.6,583.3 1302.2,573.7" fill="#5c6266" />
<polyline points="1306.8,558.0 1307.4,578.5" fill="none" stroke="#202426" stroke-width="1" />
<polygon points="1333.0,460.5 1351.6,467.9 1353.5,612.8 1335.8,602.2" fill="#202426" />
<polygon points="1336.9,492.6 1348.7,500.7 1349.0,521.5 1337.4,512.9" fill="#5c6266" />
<polyline points="1342.8,495.7 1343.2,517.2" fill="none" stroke="#202426" stroke-width="1" />
<polygon points="1337.7,535.2 1349.3,544.2 1349.6,566.4 1338.2,556.8" fill="#5c6266" />
<polyline points="1343.5,538.7 1343.9,561.6" fill="none" stroke="#202426" stroke-width="1" />
<polygon points="1338.5,574.8 1349.9,584.8 1350.2,605.5 1338.9,595.1" fill="#5c6266" />
<polyline points="1344.2,578.8 1344.6,600.3" fill="none" stroke="#202426" stroke-width="1" />
<polygon points="1359.7,471.1 1369.6,475.0 1370.6,623.1 1361.2,617.4" fill="#202426" />
<polygon points="1361.8,504.3 1368.1,508.6 1368.2,529.8 1362.0,525.2" fill="#5c6266" />
<polyline points="1364.9,505.4 1365.1,527.5" fill="none" stroke="#202426" stroke-width="1" />
<polygon points="1362.2,548.2 1368.4,553.0 1368.6,575.7 1362.5,570.6" fill="#5c6266" />
<polyline points="1365.3,549.6 1365.5,573.1" fill="none" stroke="#202426" stroke-width="1" />
<polygon points="1362.6,589.1 1368.7,594.5 1368.9,615.7 1362.9,610.1" fill="#5c6266" />
<polyline points="1365.7,590.8 1365.9,612.9" fill="none" stroke="#202426" stroke-width="1" />
<polyline points="1056.0,348.0 1068.0,460.0" fill="none" stroke="#8a8a8a" stroke-width="0.8" />
<polyline points="1148.0,386.0 1153.0,520.0" fill="none" stroke="#8a8a8a" stroke-width="0.8" />
<polyline points="1250.0,426.0 1252.0,590.0" fill="none" stroke="#8a8a8a" stroke-width="0.8" />
<polygon points="1055.0,386.0 1387.0,549.0 1387.0,556.0 1055.0,391.0" fill="#acaea8" />
<polygon points="1060.0,415.0 1387.0,593.0 1387.0,600.0 1060.0,420.0" fill="#acaea8" />
<polygon points="1094.5,437.0 1114.5,446.0 1114.5,452.0 1094.5,443.0" fill="#2c2c2e" />
<polygon points="1094.5,437.0 1114.5,446.0 1117.0,444.0 1097.0,435.5" fill="#8c8c96" />
<polygon points="1087.0,470.0 1107.0,458.0 1116.0,470.0 1116.0,478.0 1098.0,486.0 1090.0,484.0" fill="#88888c" />
<polygon points="1090.0,476.0 1110.0,466.0 1116.0,478.0 1098.0,486.0" fill="#a4a4a8" />
<polyline points="1055.0,454.0 1065.0,450.0 1065.0,476.0" fill="none" stroke="#909090" stroke-width="0.8" />
<polyline points="1060.0,492.0 1082.0,510.0 1100.0,500.0" fill="none" stroke="#909090" stroke-width="0.8" />
<polygon points="1389.0,482.0 1444.0,458.0 1444.0,404.0 1655.0,312.0 1651.0,433.0 1561.0,484.0 1533.0,500.0 1530.0,527.0 1387.0,633.0" fill="#b65c40" />
<polygon points="1514.0,375.0 1525.0,370.2 1524.0,528.2 1513.0,536.5" fill="#33363a" />
<polygon points="1515.9,423.4 1522.5,417.6 1522.4,436.6 1515.8,442.8" fill="#5c6266" />
<polygon points="1515.7,459.0 1522.3,452.4 1522.1,474.5 1515.5,481.6" fill="#5c6266" />
<polygon points="1515.4,497.7 1522.0,490.3 1521.9,512.4 1515.3,520.4" fill="#5c6266" />
<polygon points="1529.0,368.4 1540.0,363.6 1539.0,494.4 1528.0,525.2" fill="#33363a" />
<polygon points="1530.9,415.5 1537.5,402.9 1537.4,418.6 1530.8,434.3" fill="#5c6266" />
<polygon points="1530.7,450.0 1537.3,431.6 1537.1,449.9 1530.5,471.9" fill="#5c6266" />
<polygon points="1530.4,487.6 1537.0,463.0 1536.9,481.3 1530.3,509.6" fill="#5c6266" />
<polygon points="1545.0,361.5 1556.5,356.4 1555.5,485.4 1544.0,491.7" fill="#33363a" />
<polygon points="1547.0,400.5 1553.9,395.1 1553.8,410.6 1546.9,416.2" fill="#5c6266" />
<polygon points="1546.8,429.2 1553.7,423.5 1553.5,441.6 1546.6,447.4" fill="#5c6266" />
<polygon points="1546.5,460.4 1553.4,454.5 1553.3,472.5 1546.4,478.7" fill="#5c6266" />
<polygon points="1558.5,355.6 1570.0,350.6 1569.0,478.1 1557.5,484.4" fill="#33363a" />
<polygon points="1560.5,394.2 1567.4,388.8 1567.3,404.1 1560.4,409.7" fill="#5c6266" />
<polygon points="1560.3,422.5 1567.2,416.9 1567.0,434.7 1560.1,440.6" fill="#5c6266" />
<polygon points="1560.0,453.4 1566.9,447.5 1566.8,465.4 1559.9,471.5" fill="#5c6266" />
<polygon points="1573.5,349.0 1585.0,344.0 1584.0,470.0 1572.5,476.2" fill="#33363a" />
<polygon points="1575.5,387.2 1582.4,381.8 1582.3,396.9 1575.4,402.5" fill="#5c6266" />
<polygon points="1575.3,415.2 1582.2,409.5 1582.0,427.2 1575.1,433.0" fill="#5c6266" />
<polygon points="1575.0,445.7 1581.9,439.7 1581.8,457.4 1574.9,463.5" fill="#5c6266" />
<polygon points="1588.0,342.7 1597.7,338.5 1596.7,463.1 1587.0,468.4" fill="#33363a" />
<polygon points="1589.6,380.4 1595.5,375.9 1595.3,390.8 1589.5,395.5" fill="#5c6266" />
<polygon points="1589.4,408.0 1595.2,403.3 1595.1,420.7 1589.3,425.6" fill="#5c6266" />
<polygon points="1589.2,438.2 1595.0,433.2 1594.9,450.6 1589.0,455.8" fill="#5c6266" />
<polygon points="1602.0,336.6 1612.0,332.2 1611.0,455.3 1601.0,460.8" fill="#33363a" />
<polygon points="1603.7,373.9 1609.7,369.2 1609.6,383.9 1603.6,388.8" fill="#5c6266" />
<polygon points="1603.5,401.2 1609.5,396.3 1609.3,413.5 1603.3,418.5" fill="#5c6266" />
<polygon points="1603.2,431.0 1609.2,425.8 1609.1,443.0 1603.1,448.3" fill="#5c6266" />
<polygon points="1451.5,421.1 1466.0,414.5 1466.0,460.7 1451.5,467.3" fill="#3a3d42" />
<polygon points="1452.5,441.9 1465.0,435.3 1465.0,459.7 1452.5,466.3" fill="#151719" />
<polygon points="1454.0,447.9 1463.5,441.3 1463.5,456.7 1454.0,463.3" fill="#3c3f43" />
<polygon points="1470.7,411.2 1485.0,404.8 1485.0,449.8 1470.7,456.2" fill="#3a3d42" />
<polygon points="1471.7,431.5 1484.0,425.0 1484.0,448.8 1471.7,455.2" fill="#151719" />
<polygon points="1473.2,437.3 1482.5,430.9 1482.5,445.8 1473.2,452.2" fill="#3c3f43" />
<polygon points="1489.0,402.6 1502.4,396.6 1502.4,439.8 1489.0,445.8" fill="#3a3d42" />
<polygon points="1490.0,422.1 1501.4,416.0 1501.4,438.8 1490.0,444.8" fill="#151719" />
<polygon points="1491.5,427.7 1499.9,421.6 1499.9,435.8 1491.5,441.8" fill="#3c3f43" />
<polygon points="1448.6,472.1 1455.4,469.1 1455.4,505.5 1448.6,508.5" fill="#2e3134" />
<polygon points="1450.1,488.5 1453.9,485.4 1453.9,503.5 1450.1,506.5" fill="#44474b" />
<polygon points="1468.8,458.7 1481.0,453.3 1481.0,490.9 1468.8,496.3" fill="#2e3134" />
<polygon points="1470.3,475.7 1479.5,470.2 1479.5,488.9 1470.3,494.3" fill="#44474b" />
<polygon points="1492.8,447.2 1499.5,444.2 1499.5,473.9 1492.8,476.9" fill="#2e3134" />
<polygon points="1494.3,460.6 1498.0,457.6 1498.0,471.9 1494.3,474.9" fill="#44474b" />
<polygon points="1448.0,519.6 1455.0,516.4 1455.0,543.4 1448.0,546.6" fill="#2e3134" />
<polygon points="1449.5,531.7 1453.5,528.6 1453.5,541.4 1449.5,544.6" fill="#44474b" />
<polygon points="1468.0,505.2 1478.0,500.8 1478.0,527.8 1468.0,532.2" fill="#2e3134" />
<polygon points="1469.5,517.4 1476.5,512.9 1476.5,525.8 1469.5,530.2" fill="#44474b" />
<polygon points="1483.0,494.2 1494.0,489.2 1494.0,518.0 1483.0,523.0" fill="#2e3134" />
<polygon points="1484.5,507.1 1492.5,502.2 1492.5,516.0 1484.5,521.0" fill="#44474b" />
<polygon points="1450.0,561.4 1456.0,558.6 1456.0,588.6 1450.0,591.4" fill="#2e3134" />
<polygon points="1451.5,574.9 1454.5,572.1 1454.5,586.6 1451.5,589.4" fill="#44474b" />
<polygon points="1470.0,550.2 1480.0,545.8 1480.0,575.8 1470.0,580.2" fill="#2e3134" />
<polygon points="1471.5,563.8 1478.5,559.2 1478.5,573.8 1471.5,578.2" fill="#44474b" />
<polygon points="1486.0,537.2 1496.0,532.8 1496.0,562.8 1486.0,567.2" fill="#2e3134" />
<polygon points="1487.5,550.8 1494.5,546.2 1494.5,560.8 1487.5,565.2" fill="#44474b" />
<polygon points="1622.7,338.5 1630.8,334.9 1630.8,364.6 1622.7,368.4" fill="#202426" />
<polygon points="1624.3,342.3 1629.2,338.6 1629.2,362.1 1624.3,365.9" fill="#5c6266" />
<polygon points="1622.7,378.3 1630.8,374.5 1630.8,394.2 1622.7,398.3" fill="#202426" />
<polygon points="1624.3,382.1 1629.2,378.2 1629.2,391.8 1624.3,395.8" fill="#5c6266" />
<polygon points="1622.7,408.2 1630.8,404.1 1630.8,426.4 1622.7,430.6" fill="#202426" />
<polygon points="1624.3,411.9 1629.2,407.8 1629.2,423.9 1624.3,428.1" fill="#5c6266" />
<polygon points="1632.6,334.1 1639.7,330.9 1639.7,360.4 1632.6,363.7" fill="#202426" />
<polygon points="1634.0,337.8 1638.3,334.6 1638.3,357.9 1634.0,361.3" fill="#5c6266" />
<polygon points="1632.6,373.6 1639.7,370.2 1639.7,389.8 1632.6,393.3" fill="#202426" />
<polygon points="1634.0,377.3 1638.3,373.9 1638.3,387.3 1634.0,390.9" fill="#5c6266" />
<polygon points="1632.6,403.2 1639.7,399.6 1639.7,421.7 1632.6,425.4" fill="#202426" />
<polygon points="1634.0,406.9 1638.3,403.3 1638.3,419.2 1634.0,422.9" fill="#5c6266" />
<polygon points="1642.4,329.7 1649.6,326.5 1649.6,355.7 1642.4,359.1" fill="#202426" />
<polygon points="1643.8,333.4 1648.2,330.2 1648.2,353.3 1643.8,356.6" fill="#5c6266" />
<polygon points="1642.4,368.9 1649.6,365.4 1649.6,384.9 1642.4,388.5" fill="#202426" />
<polygon points="1643.8,372.5 1648.2,369.1 1648.2,382.4 1643.8,386.0" fill="#5c6266" />
<polygon points="1642.4,398.2 1649.6,394.6 1649.6,416.5 1642.4,420.3" fill="#202426" />
<polygon points="1643.8,401.9 1648.2,398.2 1648.2,414.0 1643.8,417.8" fill="#5c6266" />
<rect x="1535.2" y="520.0" width="3.6" height="54.3" fill="#b0b0aa" />
<rect x="1542.2" y="520.0" width="3.6" height="52.2" fill="#b0b0aa" />
<rect x="1549.2" y="520.0" width="3.6" height="50.1" fill="#b0b0aa" />
<rect x="1556.2" y="520.0" width="3.6" height="48.0" fill="#b0b0aa" />
<polygon points="1533.0,477.0 1561.0,469.0 1561.0,530.0 1533.0,538.0" fill="#25282a" />
<polygon points="1533.0,477.0 1540.0,476.0 1540.0,536.0 1533.0,538.0" fill="#3a3d40" />
<polygon points="1653.0,335.0 1669.0,340.0 1658.0,435.0 1650.0,433.0" fill="#c46242" />
<polyline points="1653.0,335.0 1669.0,340.0" fill="none" stroke="#8e8e8e" stroke-width="1.4" />
<polyline points="1664.0,340.0 1656.0,434.0" fill="none" stroke="#8a8a8a" stroke-width="0.8" />
<polyline points="1655.0,335.0 1669.0,339.0" fill="none" stroke="#999" stroke-width="1" />
<polygon points="1387.0,549.0 1666.0,371.0 1666.0,377.0 1387.0,556.0" fill="#d6d8de" />
<polygon points="1387.0,593.0 1663.0,401.0 1663.0,407.0 1387.0,600.0" fill="#d6d8de" />
<polyline points="1447.0,404.0 1445.0,600.0" fill="none" stroke="#888" stroke-width="0.8" />
<polyline points="1630.0,322.0 1624.0,450.0" fill="none" stroke="#888" stroke-width="0.8" />
<polygon points="1420.0,566.0 1461.0,541.0 1472.0,547.0 1434.0,575.0" fill="#2c2c2e" />
<polygon points="1420.0,566.0 1461.0,541.0 1464.0,539.0 1423.0,563.0" fill="#9c9ca2" />
<polygon points="1599.0,443.5 1627.0,430.7 1630.0,438.0 1602.0,451.0" fill="#2c2c2e" />
<polygon points="1599.0,443.5 1627.0,430.7 1629.0,428.5 1601.0,441.0" fill="#a0a0a8" />
<polygon points="1600.0,480.0 1622.0,460.0 1633.0,466.0 1612.0,486.0" fill="#8e8e92" />
<polygon points="1428.0,612.0 1452.0,592.0 1468.0,600.0 1442.0,626.0" fill="#8e8e92" />
<polyline points="1432.0,616.0 1456.0,596.0" fill="none" stroke="#bbb" stroke-width="0.7" />
<polyline points="1436.0,620.0 1460.0,600.0" fill="none" stroke="#bbb" stroke-width="0.7" />
<polygon points="1051.0,347.0 1357.0,286.0 1487.0,306.0 1534.0,295.0 1656.0,313.0 1444.0,404.0 1444.0,458.0 1391.0,482.0" fill="#83849c" />
<polygon points="1051.0,347.0 1357.0,286.0 1486.0,307.0 1486.0,316.0 1358.0,296.0 1082.0,357.0" fill="#b2573a" />
<polyline points="1051.0,347.0 1357.0,286.0 1487.0,305.0" fill="none" stroke="#8c8c8c" stroke-width="1.2" />
<polygon points="1298.0,303.0 1316.0,299.5 1359.0,306.7 1341.0,311.0" fill="#a0a0b4" />
<polyline points="1298.0,303.0 1316.0,299.5 1359.0,306.7 1341.0,311.0 1298.0,303.0" fill="none" stroke="#8a8a8a" stroke-width="1.2" />
<polygon points="1298.0,303.0 1341.0,311.0 1341.0,352.0 1298.0,360.0" fill="#b15435" />
<polygon points="1341.0,311.0 1359.0,306.7 1359.0,349.0 1341.0,352.0" fill="#c8623f" />
<polygon points="1344.5,316.0 1357.0,313.0 1357.0,344.0 1344.5,346.0" fill="#2a2c30" />
<polygon points="1346.5,318.0 1355.0,316.0 1355.0,342.0 1346.5,344.0" fill="#7a6a6c" />
<polygon points="1239.0,347.0 1326.6,327.0 1326.6,352.0 1297.0,360.0 1239.0,374.0" fill="#e2dcc6" />
<polygon points="1239.0,374.0 1297.0,360.0 1297.0,376.0 1262.0,385.0" fill="#d8d0b4" />
<polygon points="1246.0,350.4 1256.0,348.4 1256.0,371.4 1246.0,374.4" fill="#2a2d31" />
<polygon points="1262.5,346.6 1272.5,344.6 1272.5,367.6 1262.5,370.6" fill="#2a2d31" />
<polygon points="1279.0,342.9 1289.0,340.9 1289.0,363.9 1279.0,366.9" fill="#2a2d31" />
<polygon points="1295.5,339.1 1305.5,337.1 1305.5,360.1 1295.5,363.1" fill="#2a2d31" />
<polygon points="1312.0,335.3 1322.0,333.3 1322.0,356.3 1312.0,359.3" fill="#2a2d31" />
<polygon points="1359.0,315.0 1445.0,331.0 1445.0,345.0 1359.0,350.0" fill="#e2dcc6" />
<polygon points="1366.0,318.3 1376.0,320.3 1376.0,344.3 1366.0,344.3" fill="#2a2d31" />
<polygon points="1382.0,321.3 1392.0,323.3 1392.0,347.3 1382.0,347.3" fill="#2a2d31" />
<polygon points="1398.0,324.3 1408.0,326.3 1408.0,350.3 1398.0,350.3" fill="#2a2d31" />
<polygon points="1414.0,327.2 1424.0,329.2 1424.0,353.2 1414.0,353.2" fill="#2a2d31" />
<polygon points="1430.0,330.2 1440.0,332.2 1440.0,356.2 1430.0,356.2" fill="#2a2d31" />
<polygon points="1486.0,307.0 1518.0,312.6 1518.0,322.0 1490.0,319.0" fill="#a85236" />
<polygon points="1490.0,307.0 1533.0,295.3 1656.0,313.0 1648.0,322.0 1533.0,305.0 1518.0,312.0 1490.0,310.0" fill="#b2573a" />
<polyline points="1486.0,307.0 1518.0,312.6" fill="none" stroke="#8c8c8c" stroke-width="1.2" />
<polyline points="1490.0,307.0 1533.0,295.3 1656.0,313.0" fill="none" stroke="#8c8c8c" stroke-width="1.2" />
<polygon points="1298.0,363.0 1380.0,341.6 1405.0,348.0 1518.0,313.0 1520.0,322.0 1405.0,360.0 1380.0,353.0 1302.0,375.0" fill="#b2573a" />
<polyline points="1298.0,363.0 1380.0,341.6 1405.0,348.0 1518.0,313.0" fill="none" stroke="#8c8c8c" stroke-width="1.2" />
<polygon points="1298.0,363.0 1444.0,404.0 1444.0,458.0 1414.0,469.0 1299.0,426.0" fill="#8e4931" />
<polyline points="1299.0,394.0 1444.0,432.0" fill="none" stroke="#8a4028" stroke-width="0.7" />
<polyline points="1051.0,349.5 1391.0,484.5" fill="none" stroke="#70341f" stroke-width="2.2" />
<polyline points="1391.0,484.5 1444.0,460.0" fill="none" stroke="#7a3a24" stroke-width="2" />
<polyline points="1444.0,406.0 1655.0,314.5" fill="none" stroke="#7a3a24" stroke-width="2" />
<polyline points="1051.0,347.0 1391.0,482.0 1444.0,458.0" fill="none" stroke="#8e8e8e" stroke-width="1.8" />
<polyline points="1298.0,363.0 1444.0,404.0 1655.8,313.0" fill="none" stroke="#8e8e8e" stroke-width="1.8" />
<polyline points="1444.0,404.0 1444.0,458.0" fill="none" stroke="#d07050" stroke-width="1" />
<polygon points="1312.0,412.0 1326.0,408.0 1326.0,430.0 1312.0,434.0" fill="#c4806e" opacity="0.85"/>
<polyline points="1312.0,412.0 1326.0,408.0 1326.0,430.0 1312.0,434.0 1312.0,412.0" fill="none" stroke="#c8c8c8" stroke-width="0.8" />
<polyline points="1346.0,386.0 1346.0,399.0" fill="none" stroke="#0000ff" stroke-width="1.6" />
<polyline points="1346.0,399.0 1335.0,402.5" fill="none" stroke="#ff0000" stroke-width="1.6" />
<polyline points="1346.0,399.0 1357.0,402.0" fill="none" stroke="#00dd00" stroke-width="1.6" />
<polyline points="1107.0,367.0 1300.0,323.0" fill="none" stroke="#55555c" stroke-width="1.1" />
<circle cx="1118.4" cy="364.4" r="1.1" fill="#151515"/>
<circle cx="1129.7" cy="361.8" r="1.1" fill="#151515"/>
<circle cx="1141.1" cy="359.2" r="1.1" fill="#151515"/>
<circle cx="1152.4" cy="356.6" r="1.1" fill="#151515"/>
<circle cx="1163.8" cy="354.1" r="1.1" fill="#151515"/>
<circle cx="1175.1" cy="351.5" r="1.1" fill="#151515"/>
<circle cx="1186.5" cy="348.9" r="1.1" fill="#151515"/>
<circle cx="1197.8" cy="346.3" r="1.1" fill="#151515"/>
<circle cx="1209.2" cy="343.7" r="1.1" fill="#151515"/>
<circle cx="1220.5" cy="341.1" r="1.1" fill="#151515"/>
<circle cx="1231.9" cy="338.5" r="1.1" fill="#151515"/>
<circle cx="1243.2" cy="335.9" r="1.1" fill="#151515"/>
<circle cx="1254.6" cy="333.4" r="1.1" fill="#151515"/>
<circle cx="1265.9" cy="330.8" r="1.1" fill="#151515"/>
<circle cx="1277.3" cy="328.2" r="1.1" fill="#151515"/>
<circle cx="1288.6" cy="325.6" r="1.1" fill="#151515"/>
<polyline points="1148.0,384.0 1300.0,345.0" fill="none" stroke="#55555c" stroke-width="1.1" />
<circle cx="1158.9" cy="381.2" r="1.1" fill="#151515"/>
<circle cx="1169.7" cy="378.4" r="1.1" fill="#151515"/>
<circle cx="1180.6" cy="375.6" r="1.1" fill="#151515"/>
<circle cx="1191.4" cy="372.9" r="1.1" fill="#151515"/>
<circle cx="1202.3" cy="370.1" r="1.1" fill="#151515"/>
<circle cx="1213.1" cy="367.3" r="1.1" fill="#151515"/>
<circle cx="1224.0" cy="364.5" r="1.1" fill="#151515"/>
<circle cx="1234.9" cy="361.7" r="1.1" fill="#151515"/>
<circle cx="1245.7" cy="358.9" r="1.1" fill="#151515"/>
<circle cx="1256.6" cy="356.1" r="1.1" fill="#151515"/>
<circle cx="1267.4" cy="353.4" r="1.1" fill="#151515"/>
<circle cx="1278.3" cy="350.6" r="1.1" fill="#151515"/>
<circle cx="1289.1" cy="347.8" r="1.1" fill="#151515"/>
<polyline points="1196.0,404.0 1300.0,377.0" fill="none" stroke="#55555c" stroke-width="1.1" />
<circle cx="1207.6" cy="401.0" r="1.1" fill="#151515"/>
<circle cx="1219.1" cy="398.0" r="1.1" fill="#151515"/>
<circle cx="1230.7" cy="395.0" r="1.1" fill="#151515"/>
<circle cx="1242.2" cy="392.0" r="1.1" fill="#151515"/>
<circle cx="1253.8" cy="389.0" r="1.1" fill="#151515"/>
<circle cx="1265.3" cy="386.0" r="1.1" fill="#151515"/>
<circle cx="1276.9" cy="383.0" r="1.1" fill="#151515"/>
<circle cx="1288.4" cy="380.0" r="1.1" fill="#151515"/>
<polyline points="1250.0,423.0 1297.0,411.0" fill="none" stroke="#55555c" stroke-width="1.1" />
<circle cx="1261.8" cy="420.0" r="1.1" fill="#151515"/>
<circle cx="1273.5" cy="417.0" r="1.1" fill="#151515"/>
<circle cx="1285.2" cy="414.0" r="1.1" fill="#151515"/>
<polyline points="1139.0,347.0 1300.0,407.0" fill="none" stroke="#55555c" stroke-width="1.1" />
<circle cx="1149.7" cy="351.0" r="1.1" fill="#151515"/>
<circle cx="1160.5" cy="355.0" r="1.1" fill="#151515"/>
<circle cx="1171.2" cy="359.0" r="1.1" fill="#151515"/>
<circle cx="1181.9" cy="363.0" r="1.1" fill="#151515"/>
<circle cx="1192.7" cy="367.0" r="1.1" fill="#151515"/>
<circle cx="1203.4" cy="371.0" r="1.1" fill="#151515"/>
<circle cx="1214.1" cy="375.0" r="1.1" fill="#151515"/>
<circle cx="1224.9" cy="379.0" r="1.1" fill="#151515"/>
<circle cx="1235.6" cy="383.0" r="1.1" fill="#151515"/>
<circle cx="1246.3" cy="387.0" r="1.1" fill="#151515"/>
<circle cx="1257.1" cy="391.0" r="1.1" fill="#151515"/>
<circle cx="1267.8" cy="395.0" r="1.1" fill="#151515"/>
<circle cx="1278.5" cy="399.0" r="1.1" fill="#151515"/>
<circle cx="1289.3" cy="403.0" r="1.1" fill="#151515"/>
<polyline points="1184.0,331.0 1300.0,369.0" fill="none" stroke="#55555c" stroke-width="1.1" />
<circle cx="1194.5" cy="334.5" r="1.1" fill="#151515"/>
<circle cx="1205.1" cy="337.9" r="1.1" fill="#151515"/>
<circle cx="1215.6" cy="341.4" r="1.1" fill="#151515"/>
<circle cx="1226.2" cy="344.8" r="1.1" fill="#151515"/>
<circle cx="1236.7" cy="348.3" r="1.1" fill="#151515"/>
<circle cx="1247.3" cy="351.7" r="1.1" fill="#151515"/>
<circle cx="1257.8" cy="355.2" r="1.1" fill="#151515"/>
<circle cx="1268.4" cy="358.6" r="1.1" fill="#151515"/>
<circle cx="1278.9" cy="362.1" r="1.1" fill="#151515"/>
<circle cx="1289.5" cy="365.5" r="1.1" fill="#151515"/>
<polyline points="1250.0,321.0 1300.0,331.0" fill="none" stroke="#55555c" stroke-width="1.1" />
<circle cx="1262.5" cy="323.5" r="1.1" fill="#151515"/>
<circle cx="1275.0" cy="326.0" r="1.1" fill="#151515"/>
<circle cx="1287.5" cy="328.5" r="1.1" fill="#151515"/>
<polyline points="1100.0,355.0 1150.0,372.0" fill="none" stroke="#55555c" stroke-width="1.1" />
<circle cx="1112.5" cy="359.2" r="1.1" fill="#151515"/>
<circle cx="1125.0" cy="363.5" r="1.1" fill="#151515"/>
<circle cx="1137.5" cy="367.8" r="1.1" fill="#151515"/>
<polyline points="1262.0,442.0 1300.0,430.0" fill="none" stroke="#55555c" stroke-width="1.1" />
<circle cx="1274.7" cy="438.0" r="1.1" fill="#151515"/>
<circle cx="1287.3" cy="434.0" r="1.1" fill="#151515"/>
<polyline points="1450.0,367.0 1560.0,321.0" fill="none" stroke="#55555c" stroke-width="1.1" />
<circle cx="1461.0" cy="362.4" r="1.1" fill="#151515"/>
<circle cx="1472.0" cy="357.8" r="1.1" fill="#151515"/>
<circle cx="1483.0" cy="353.2" r="1.1" fill="#151515"/>
<circle cx="1494.0" cy="348.6" r="1.1" fill="#151515"/>
<circle cx="1505.0" cy="344.0" r="1.1" fill="#151515"/>
<circle cx="1516.0" cy="339.4" r="1.1" fill="#151515"/>
<circle cx="1527.0" cy="334.8" r="1.1" fill="#151515"/>
<circle cx="1538.0" cy="330.2" r="1.1" fill="#151515"/>
<circle cx="1549.0" cy="325.6" r="1.1" fill="#151515"/>
<polyline points="1470.0,390.0 1620.0,327.0" fill="none" stroke="#55555c" stroke-width="1.1" />
<circle cx="1480.7" cy="385.5" r="1.1" fill="#151515"/>
<circle cx="1491.4" cy="381.0" r="1.1" fill="#151515"/>
<circle cx="1502.1" cy="376.5" r="1.1" fill="#151515"/>
<circle cx="1512.9" cy="372.0" r="1.1" fill="#151515"/>
<circle cx="1523.6" cy="367.5" r="1.1" fill="#151515"/>
<circle cx="1534.3" cy="363.0" r="1.1" fill="#151515"/>
<circle cx="1545.0" cy="358.5" r="1.1" fill="#151515"/>
<circle cx="1555.7" cy="354.0" r="1.1" fill="#151515"/>
<circle cx="1566.4" cy="349.5" r="1.1" fill="#151515"/>
<circle cx="1577.1" cy="345.0" r="1.1" fill="#151515"/>
<circle cx="1587.9" cy="340.5" r="1.1" fill="#151515"/>
<circle cx="1598.6" cy="336.0" r="1.1" fill="#151515"/>
<circle cx="1609.3" cy="331.5" r="1.1" fill="#151515"/>
<polyline points="1400.0,392.0 1440.0,375.0" fill="none" stroke="#55555c" stroke-width="1.1" />
<circle cx="1413.3" cy="386.3" r="1.1" fill="#151515"/>
<circle cx="1426.7" cy="380.7" r="1.1" fill="#151515"/>
<polyline points="1444.0,346.0 1530.0,364.0" fill="none" stroke="#55555c" stroke-width="1.1" />
<circle cx="1456.3" cy="348.6" r="1.1" fill="#151515"/>
<circle cx="1468.6" cy="351.1" r="1.1" fill="#151515"/>
<circle cx="1480.9" cy="353.7" r="1.1" fill="#151515"/>
<circle cx="1493.1" cy="356.3" r="1.1" fill="#151515"/>
<circle cx="1505.4" cy="358.9" r="1.1" fill="#151515"/>
<circle cx="1517.7" cy="361.4" r="1.1" fill="#151515"/>
<polyline points="1489.0,333.0 1600.0,355.0" fill="none" stroke="#55555c" stroke-width="1.1" />
<circle cx="1500.1" cy="335.2" r="1.1" fill="#151515"/>
<circle cx="1511.2" cy="337.4" r="1.1" fill="#151515"/>
<circle cx="1522.3" cy="339.6" r="1.1" fill="#151515"/>
<circle cx="1533.4" cy="341.8" r="1.1" fill="#151515"/>
<circle cx="1544.5" cy="344.0" r="1.1" fill="#151515"/>
<circle cx="1555.6" cy="346.2" r="1.1" fill="#151515"/>
<circle cx="1566.7" cy="348.4" r="1.1" fill="#151515"/>
<circle cx="1577.8" cy="350.6" r="1.1" fill="#151515"/>
<circle cx="1588.9" cy="352.8" r="1.1" fill="#151515"/>
<polyline points="1545.0,318.0 1650.0,334.0" fill="none" stroke="#55555c" stroke-width="1.1" />
<circle cx="1556.7" cy="319.8" r="1.1" fill="#151515"/>
<circle cx="1568.3" cy="321.6" r="1.1" fill="#151515"/>
<circle cx="1580.0" cy="323.3" r="1.1" fill="#151515"/>
<circle cx="1591.7" cy="325.1" r="1.1" fill="#151515"/>
<circle cx="1603.3" cy="326.9" r="1.1" fill="#151515"/>
<circle cx="1615.0" cy="328.7" r="1.1" fill="#151515"/>
<circle cx="1626.7" cy="330.4" r="1.1" fill="#151515"/>
<circle cx="1638.3" cy="332.2" r="1.1" fill="#151515"/>
<polyline points="1380.0,356.0 1444.0,372.0" fill="none" stroke="#55555c" stroke-width="1.1" />
<circle cx="1392.8" cy="359.2" r="1.1" fill="#151515"/>
<circle cx="1405.6" cy="362.4" r="1.1" fill="#151515"/>
<circle cx="1418.4" cy="365.6" r="1.1" fill="#151515"/>
<circle cx="1431.2" cy="368.8" r="1.1" fill="#151515"/>
<polyline points="1362.0,290.0 1480.0,308.0" fill="none" stroke="#55555c" stroke-width="1.1" />
<circle cx="1373.8" cy="291.8" r="1.1" fill="#151515"/>
<circle cx="1385.6" cy="293.6" r="1.1" fill="#151515"/>
<circle cx="1397.4" cy="295.4" r="1.1" fill="#151515"/>
<circle cx="1409.2" cy="297.2" r="1.1" fill="#151515"/>
<circle cx="1421.0" cy="299.0" r="1.1" fill="#151515"/>
<circle cx="1432.8" cy="300.8" r="1.1" fill="#151515"/>
<circle cx="1444.6" cy="302.6" r="1.1" fill="#151515"/>
<circle cx="1456.4" cy="304.4" r="1.1" fill="#151515"/>
<circle cx="1468.2" cy="306.2" r="1.1" fill="#151515"/>
<polyline points="1420.0,320.0 1480.0,310.0" fill="none" stroke="#55555c" stroke-width="1.1" />
<circle cx="1432.0" cy="318.0" r="1.1" fill="#151515"/>
<circle cx="1444.0" cy="316.0" r="1.1" fill="#151515"/>
<circle cx="1456.0" cy="314.0" r="1.1" fill="#151515"/>
<circle cx="1468.0" cy="312.0" r="1.1" fill="#151515"/>
<rect x="1107.0" y="335.0" width="14.0" height="20.0" fill="#747472" />
<rect x="1107.6" y="336.5" width="1.3" height="18.0" fill="#aeaeaa" />
<rect x="1110.0" y="336.5" width="1.3" height="18.0" fill="#aeaeaa" />
<rect x="1112.4" y="336.5" width="1.3" height="18.0" fill="#aeaeaa" />
<rect x="1114.8" y="336.5" width="1.3" height="18.0" fill="#aeaeaa" />
<rect x="1117.2" y="336.5" width="1.3" height="18.0" fill="#aeaeaa" />
<rect x="1106.5" y="336.0" width="15.0" height="1.6" fill="#bcbcb8" />
<polyline points="1115.4,341.0 1115.4,317.0" fill="none" stroke="#7a7a7a" stroke-width="1" />
<rect x="1125.0" y="341.0" width="12.0" height="18.0" fill="#747472" />
<rect x="1125.6" y="342.5" width="1.3" height="16.0" fill="#aeaeaa" />
<rect x="1128.0" y="342.5" width="1.3" height="16.0" fill="#aeaeaa" />
<rect x="1130.4" y="342.5" width="1.3" height="16.0" fill="#aeaeaa" />
<rect x="1132.8" y="342.5" width="1.3" height="16.0" fill="#aeaeaa" />
<rect x="1135.2" y="342.5" width="1.3" height="16.0" fill="#aeaeaa" />
<rect x="1124.5" y="342.0" width="13.0" height="1.6" fill="#bcbcb8" />
<polyline points="1127.0,340.0 1127.0,316.0" fill="none" stroke="#7a7a7a" stroke-width="1" />
<rect x="1158.0" y="354.0" width="13.0" height="20.0" fill="#747472" />
<rect x="1158.6" y="355.5" width="1.3" height="18.0" fill="#aeaeaa" />
<rect x="1161.0" y="355.5" width="1.3" height="18.0" fill="#aeaeaa" />
<rect x="1163.4" y="355.5" width="1.3" height="18.0" fill="#aeaeaa" />
<rect x="1165.8" y="355.5" width="1.3" height="18.0" fill="#aeaeaa" />
<rect x="1168.2" y="355.5" width="1.3" height="18.0" fill="#aeaeaa" />
<rect x="1157.5" y="355.0" width="14.0" height="1.6" fill="#bcbcb8" />
<rect x="1166.0" y="331.0" width="16.0" height="30.0" fill="#747472" />
<rect x="1166.6" y="332.5" width="1.3" height="28.0" fill="#aeaeaa" />
<rect x="1169.0" y="332.5" width="1.3" height="28.0" fill="#aeaeaa" />
<rect x="1171.4" y="332.5" width="1.3" height="28.0" fill="#aeaeaa" />
<rect x="1173.8" y="332.5" width="1.3" height="28.0" fill="#aeaeaa" />
<rect x="1176.2" y="332.5" width="1.3" height="28.0" fill="#aeaeaa" />
<rect x="1178.6" y="332.5" width="1.3" height="28.0" fill="#aeaeaa" />
<rect x="1165.5" y="332.0" width="17.0" height="1.6" fill="#bcbcb8" />
<polyline points="1175.6,340.0 1175.6,321.0" fill="none" stroke="#7a7a7a" stroke-width="1" />
<rect x="1188.0" y="333.0" width="10.0" height="11.0" fill="#747472" />
<rect x="1188.6" y="334.5" width="1.3" height="9.0" fill="#aeaeaa" />
<rect x="1191.0" y="334.5" width="1.3" height="9.0" fill="#aeaeaa" />
<rect x="1193.4" y="334.5" width="1.3" height="9.0" fill="#aeaeaa" />
<rect x="1195.8" y="334.5" width="1.3" height="9.0" fill="#aeaeaa" />
<rect x="1187.5" y="334.0" width="11.0" height="1.6" fill="#bcbcb8" />
<polyline points="1194.0,336.3 1194.0,305.0" fill="none" stroke="#7a7a7a" stroke-width="1" />
<rect x="1203.0" y="346.0" width="13.0" height="9.0" fill="#a8a8a6" />
<rect x="1198.0" y="368.0" width="16.0" height="22.0" fill="#747472" />
<rect x="1198.6" y="369.5" width="1.3" height="20.0" fill="#aeaeaa" />
<rect x="1201.0" y="369.5" width="1.3" height="20.0" fill="#aeaeaa" />
<rect x="1203.4" y="369.5" width="1.3" height="20.0" fill="#aeaeaa" />
<rect x="1205.8" y="369.5" width="1.3" height="20.0" fill="#aeaeaa" />
<rect x="1208.2" y="369.5" width="1.3" height="20.0" fill="#aeaeaa" />
<rect x="1210.6" y="369.5" width="1.3" height="20.0" fill="#aeaeaa" />
<rect x="1197.5" y="369.0" width="17.0" height="1.6" fill="#bcbcb8" />
<rect x="1220.0" y="360.0" width="27.0" height="28.0" fill="#747472" />
<rect x="1220.6" y="361.5" width="1.3" height="26.0" fill="#aeaeaa" />
<rect x="1223.0" y="361.5" width="1.3" height="26.0" fill="#aeaeaa" />
<rect x="1225.4" y="361.5" width="1.3" height="26.0" fill="#aeaeaa" />
<rect x="1227.8" y="361.5" width="1.3" height="26.0" fill="#aeaeaa" />
<rect x="1230.2" y="361.5" width="1.3" height="26.0" fill="#aeaeaa" />
<rect x="1232.6" y="361.5" width="1.3" height="26.0" fill="#aeaeaa" />
<rect x="1235.0" y="361.5" width="1.3" height="26.0" fill="#aeaeaa" />
<rect x="1237.4" y="361.5" width="1.3" height="26.0" fill="#aeaeaa" />
<rect x="1239.8" y="361.5" width="1.3" height="26.0" fill="#aeaeaa" />
<rect x="1242.2" y="361.5" width="1.3" height="26.0" fill="#aeaeaa" />
<rect x="1244.6" y="361.5" width="1.3" height="26.0" fill="#aeaeaa" />
<rect x="1219.5" y="361.0" width="28.0" height="1.6" fill="#bcbcb8" />
<rect x="1223.0" y="318.0" width="26.0" height="20.0" fill="#747472" />
<rect x="1223.6" y="319.5" width="1.3" height="18.0" fill="#aeaeaa" />
<rect x="1226.0" y="319.5" width="1.3" height="18.0" fill="#aeaeaa" />
<rect x="1228.4" y="319.5" width="1.3" height="18.0" fill="#aeaeaa" />
<rect x="1230.8" y="319.5" width="1.3" height="18.0" fill="#aeaeaa" />
<rect x="1233.2" y="319.5" width="1.3" height="18.0" fill="#aeaeaa" />
<rect x="1235.6" y="319.5" width="1.3" height="18.0" fill="#aeaeaa" />
<rect x="1238.0" y="319.5" width="1.3" height="18.0" fill="#aeaeaa" />
<rect x="1240.4" y="319.5" width="1.3" height="18.0" fill="#aeaeaa" />
<rect x="1242.8" y="319.5" width="1.3" height="18.0" fill="#aeaeaa" />
<rect x="1245.2" y="319.5" width="1.3" height="18.0" fill="#aeaeaa" />
<rect x="1222.5" y="319.0" width="27.0" height="1.6" fill="#bcbcb8" />
<polyline points="1238.6,324.0 1238.6,300.0" fill="none" stroke="#7a7a7a" stroke-width="1" />
<rect x="1221.0" y="342.0" width="20.0" height="18.0" fill="#747472" />
<rect x="1221.6" y="343.5" width="1.3" height="16.0" fill="#aeaeaa" />
<rect x="1224.0" y="343.5" width="1.3" height="16.0" fill="#aeaeaa" />
<rect x="1226.4" y="343.5" width="1.3" height="16.0" fill="#aeaeaa" />
<rect x="1228.8" y="343.5" width="1.3" height="16.0" fill="#aeaeaa" />
<rect x="1231.2" y="343.5" width="1.3" height="16.0" fill="#aeaeaa" />
<rect x="1233.6" y="343.5" width="1.3" height="16.0" fill="#aeaeaa" />
<rect x="1236.0" y="343.5" width="1.3" height="16.0" fill="#aeaeaa" />
<rect x="1238.4" y="343.5" width="1.3" height="16.0" fill="#aeaeaa" />
<rect x="1220.5" y="343.0" width="21.0" height="1.6" fill="#bcbcb8" />
<rect x="1257.0" y="364.0" width="12.0" height="28.0" fill="#a0a09e" />
<rect x="1258.0" y="366.0" width="10.0" height="8.0" fill="#c0c0bc" />
<rect x="1266.0" y="393.0" width="13.0" height="9.0" fill="#747472" />
<rect x="1266.6" y="394.5" width="1.3" height="7.0" fill="#aeaeaa" />
<rect x="1269.0" y="394.5" width="1.3" height="7.0" fill="#aeaeaa" />
<rect x="1271.4" y="394.5" width="1.3" height="7.0" fill="#aeaeaa" />
<rect x="1273.8" y="394.5" width="1.3" height="7.0" fill="#aeaeaa" />
<rect x="1276.2" y="394.5" width="1.3" height="7.0" fill="#aeaeaa" />
<rect x="1265.5" y="394.0" width="14.0" height="1.6" fill="#bcbcb8" />
<rect x="1286.0" y="305.0" width="14.0" height="18.0" fill="#747472" />
<rect x="1286.6" y="306.5" width="1.3" height="16.0" fill="#aeaeaa" />
<rect x="1289.0" y="306.5" width="1.3" height="16.0" fill="#aeaeaa" />
<rect x="1291.4" y="306.5" width="1.3" height="16.0" fill="#aeaeaa" />
<rect x="1293.8" y="306.5" width="1.3" height="16.0" fill="#aeaeaa" />
<rect x="1296.2" y="306.5" width="1.3" height="16.0" fill="#aeaeaa" />
<rect x="1285.5" y="306.0" width="15.0" height="1.6" fill="#bcbcb8" />
<rect x="1259.0" y="421.0" width="21.0" height="16.0" fill="#747472" />
<rect x="1259.6" y="422.5" width="1.3" height="14.0" fill="#aeaeaa" />
<rect x="1262.0" y="422.5" width="1.3" height="14.0" fill="#aeaeaa" />
<rect x="1264.4" y="422.5" width="1.3" height="14.0" fill="#aeaeaa" />
<rect x="1266.8" y="422.5" width="1.3" height="14.0" fill="#aeaeaa" />
<rect x="1269.2" y="422.5" width="1.3" height="14.0" fill="#aeaeaa" />
<rect x="1271.6" y="422.5" width="1.3" height="14.0" fill="#aeaeaa" />
<rect x="1274.0" y="422.5" width="1.3" height="14.0" fill="#aeaeaa" />
<rect x="1276.4" y="422.5" width="1.3" height="14.0" fill="#aeaeaa" />
<rect x="1258.5" y="422.0" width="22.0" height="1.6" fill="#bcbcb8" />
<rect x="1334.0" y="288.0" width="16.0" height="15.0" fill="#747472" />
<rect x="1334.6" y="289.5" width="1.3" height="13.0" fill="#aeaeaa" />
<rect x="1337.0" y="289.5" width="1.3" height="13.0" fill="#aeaeaa" />
<rect x="1339.4" y="289.5" width="1.3" height="13.0" fill="#aeaeaa" />
<rect x="1341.8" y="289.5" width="1.3" height="13.0" fill="#aeaeaa" />
<rect x="1344.2" y="289.5" width="1.3" height="13.0" fill="#aeaeaa" />
<rect x="1346.6" y="289.5" width="1.3" height="13.0" fill="#aeaeaa" />
<rect x="1333.5" y="289.0" width="17.0" height="1.6" fill="#bcbcb8" />
<polyline points="1343.6,292.5 1343.6,276.0" fill="none" stroke="#7a7a7a" stroke-width="1" />
<rect x="1380.0" y="297.0" width="15.0" height="19.0" fill="#747472" />
<rect x="1380.6" y="298.5" width="1.3" height="17.0" fill="#aeaeaa" />
<rect x="1383.0" y="298.5" width="1.3" height="17.0" fill="#aeaeaa" />
<rect x="1385.4" y="298.5" width="1.3" height="17.0" fill="#aeaeaa" />
<rect x="1387.8" y="298.5" width="1.3" height="17.0" fill="#aeaeaa" />
<rect x="1390.2" y="298.5" width="1.3" height="17.0" fill="#aeaeaa" />
<rect x="1392.6" y="298.5" width="1.3" height="17.0" fill="#aeaeaa" />
<rect x="1379.5" y="298.0" width="16.0" height="1.6" fill="#bcbcb8" />
<polyline points="1389.0,302.7 1389.0,279.0" fill="none" stroke="#7a7a7a" stroke-width="1" />
<rect x="1418.0" y="303.0" width="18.0" height="15.0" fill="#747472" />
<rect x="1418.6" y="304.5" width="1.3" height="13.0" fill="#aeaeaa" />
<rect x="1421.0" y="304.5" width="1.3" height="13.0" fill="#aeaeaa" />
<rect x="1423.4" y="304.5" width="1.3" height="13.0" fill="#aeaeaa" />
<rect x="1425.8" y="304.5" width="1.3" height="13.0" fill="#aeaeaa" />
<rect x="1428.2" y="304.5" width="1.3" height="13.0" fill="#aeaeaa" />
<rect x="1430.6" y="304.5" width="1.3" height="13.0" fill="#aeaeaa" />
<rect x="1433.0" y="304.5" width="1.3" height="13.0" fill="#aeaeaa" />
<rect x="1417.5" y="304.0" width="19.0" height="1.6" fill="#bcbcb8" />
<rect x="1443.0" y="307.0" width="17.0" height="15.0" fill="#747472" />
<rect x="1443.6" y="308.5" width="1.3" height="13.0" fill="#aeaeaa" />
<rect x="1446.0" y="308.5" width="1.3" height="13.0" fill="#aeaeaa" />
<rect x="1448.4" y="308.5" width="1.3" height="13.0" fill="#aeaeaa" />
<rect x="1450.8" y="308.5" width="1.3" height="13.0" fill="#aeaeaa" />
<rect x="1453.2" y="308.5" width="1.3" height="13.0" fill="#aeaeaa" />
<rect x="1455.6" y="308.5" width="1.3" height="13.0" fill="#aeaeaa" />
<rect x="1458.0" y="308.5" width="1.3" height="13.0" fill="#aeaeaa" />
<rect x="1442.5" y="308.0" width="18.0" height="1.6" fill="#bcbcb8" />
<rect x="1387.0" y="352.0" width="18.0" height="32.0" fill="#747472" />
<rect x="1387.6" y="353.5" width="1.3" height="30.0" fill="#aeaeaa" />
<rect x="1390.0" y="353.5" width="1.3" height="30.0" fill="#aeaeaa" />
<rect x="1392.4" y="353.5" width="1.3" height="30.0" fill="#aeaeaa" />
<rect x="1394.8" y="353.5" width="1.3" height="30.0" fill="#aeaeaa" />
<rect x="1397.2" y="353.5" width="1.3" height="30.0" fill="#aeaeaa" />
<rect x="1399.6" y="353.5" width="1.3" height="30.0" fill="#aeaeaa" />
<rect x="1402.0" y="353.5" width="1.3" height="30.0" fill="#aeaeaa" />
<rect x="1386.5" y="353.0" width="19.0" height="1.6" fill="#bcbcb8" />
<rect x="1405.0" y="357.0" width="20.0" height="32.0" fill="#747472" />
<rect x="1405.6" y="358.5" width="1.3" height="30.0" fill="#aeaeaa" />
<rect x="1408.0" y="358.5" width="1.3" height="30.0" fill="#aeaeaa" />
<rect x="1410.4" y="358.5" width="1.3" height="30.0" fill="#aeaeaa" />
<rect x="1412.8" y="358.5" width="1.3" height="30.0" fill="#aeaeaa" />
<rect x="1415.2" y="358.5" width="1.3" height="30.0" fill="#aeaeaa" />
<rect x="1417.6" y="358.5" width="1.3" height="30.0" fill="#aeaeaa" />
<rect x="1420.0" y="358.5" width="1.3" height="30.0" fill="#aeaeaa" />
<rect x="1422.4" y="358.5" width="1.3" height="30.0" fill="#aeaeaa" />
<rect x="1404.5" y="358.0" width="21.0" height="1.6" fill="#bcbcb8" />
<polyline points="1417.0,366.6 1417.0,341.0" fill="none" stroke="#7a7a7a" stroke-width="1" />
<rect x="1446.0" y="366.0" width="14.0" height="11.0" fill="#747472" />
<rect x="1446.6" y="367.5" width="1.3" height="9.0" fill="#aeaeaa" />
<rect x="1449.0" y="367.5" width="1.3" height="9.0" fill="#aeaeaa" />
<rect x="1451.4" y="367.5" width="1.3" height="9.0" fill="#aeaeaa" />
<rect x="1453.8" y="367.5" width="1.3" height="9.0" fill="#aeaeaa" />
<rect x="1456.2" y="367.5" width="1.3" height="9.0" fill="#aeaeaa" />
<rect x="1445.5" y="367.0" width="15.0" height="1.6" fill="#bcbcb8" />
<rect x="1280.0" y="303.0" width="16.0" height="16.0" fill="#747472" />
<rect x="1280.6" y="304.5" width="1.3" height="14.0" fill="#aeaeaa" />
<rect x="1283.0" y="304.5" width="1.3" height="14.0" fill="#aeaeaa" />
<rect x="1285.4" y="304.5" width="1.3" height="14.0" fill="#aeaeaa" />
<rect x="1287.8" y="304.5" width="1.3" height="14.0" fill="#aeaeaa" />
<rect x="1290.2" y="304.5" width="1.3" height="14.0" fill="#aeaeaa" />
<rect x="1292.6" y="304.5" width="1.3" height="14.0" fill="#aeaeaa" />
<rect x="1279.5" y="304.0" width="17.0" height="1.6" fill="#bcbcb8" />
<polyline points="1289.6,307.8 1289.6,289.0" fill="none" stroke="#7a7a7a" stroke-width="1" />
<rect x="1504.0" y="301.0" width="10.0" height="10.0" fill="#6c6c6a" />
<rect x="1531.0" y="310.0" width="12.0" height="10.0" fill="#747472" />
<rect x="1531.6" y="311.5" width="1.3" height="8.0" fill="#aeaeaa" />
<rect x="1534.0" y="311.5" width="1.3" height="8.0" fill="#aeaeaa" />
<rect x="1536.4" y="311.5" width="1.3" height="8.0" fill="#aeaeaa" />
<rect x="1538.8" y="311.5" width="1.3" height="8.0" fill="#aeaeaa" />
<rect x="1541.2" y="311.5" width="1.3" height="8.0" fill="#aeaeaa" />
<rect x="1530.5" y="311.0" width="13.0" height="1.6" fill="#bcbcb8" />
<polyline points="1538.2,313.0 1538.2,288.0" fill="none" stroke="#7a7a7a" stroke-width="1" />
<rect x="1561.0" y="317.0" width="7.0" height="11.0" fill="#747472" />
<rect x="1561.6" y="318.5" width="1.3" height="9.0" fill="#aeaeaa" />
<rect x="1564.0" y="318.5" width="1.3" height="9.0" fill="#aeaeaa" />
<rect x="1560.5" y="318.0" width="8.0" height="1.6" fill="#bcbcb8" />
<rect x="1573.0" y="315.0" width="11.0" height="9.0" fill="#747472" />
<rect x="1573.6" y="316.5" width="1.3" height="7.0" fill="#aeaeaa" />
<rect x="1576.0" y="316.5" width="1.3" height="7.0" fill="#aeaeaa" />
<rect x="1578.4" y="316.5" width="1.3" height="7.0" fill="#aeaeaa" />
<rect x="1580.8" y="316.5" width="1.3" height="7.0" fill="#aeaeaa" />
<rect x="1572.5" y="316.0" width="12.0" height="1.6" fill="#bcbcb8" />
<polyline points="1579.6,317.7 1579.6,301.0" fill="none" stroke="#7a7a7a" stroke-width="1" />
<rect x="1589.0" y="322.0" width="19.0" height="12.0" fill="#747472" />
<rect x="1589.6" y="323.5" width="1.3" height="10.0" fill="#aeaeaa" />
<rect x="1592.0" y="323.5" width="1.3" height="10.0" fill="#aeaeaa" />
<rect x="1594.4" y="323.5" width="1.3" height="10.0" fill="#aeaeaa" />
<rect x="1596.8" y="323.5" width="1.3" height="10.0" fill="#aeaeaa" />
<rect x="1599.2" y="323.5" width="1.3" height="10.0" fill="#aeaeaa" />
<rect x="1601.6" y="323.5" width="1.3" height="10.0" fill="#aeaeaa" />
<rect x="1604.0" y="323.5" width="1.3" height="10.0" fill="#aeaeaa" />
<rect x="1588.5" y="323.0" width="20.0" height="1.6" fill="#bcbcb8" />
<rect x="1450.0" y="309.0" width="22.0" height="19.0" fill="#747472" />
<rect x="1450.6" y="310.5" width="1.3" height="17.0" fill="#aeaeaa" />
<rect x="1453.0" y="310.5" width="1.3" height="17.0" fill="#aeaeaa" />
<rect x="1455.4" y="310.5" width="1.3" height="17.0" fill="#aeaeaa" />
<rect x="1457.8" y="310.5" width="1.3" height="17.0" fill="#aeaeaa" />
<rect x="1460.2" y="310.5" width="1.3" height="17.0" fill="#aeaeaa" />
<rect x="1462.6" y="310.5" width="1.3" height="17.0" fill="#aeaeaa" />
<rect x="1465.0" y="310.5" width="1.3" height="17.0" fill="#aeaeaa" />
<rect x="1467.4" y="310.5" width="1.3" height="17.0" fill="#aeaeaa" />
<rect x="1469.8" y="310.5" width="1.3" height="17.0" fill="#aeaeaa" />
<rect x="1449.5" y="310.0" width="23.0" height="1.6" fill="#bcbcb8" />
<rect x="1450.0" y="367.0" width="14.0" height="13.0" fill="#747472" />
<rect x="1450.6" y="368.5" width="1.3" height="11.0" fill="#aeaeaa" />
<rect x="1453.0" y="368.5" width="1.3" height="11.0" fill="#aeaeaa" />
<rect x="1455.4" y="368.5" width="1.3" height="11.0" fill="#aeaeaa" />
<rect x="1457.8" y="368.5" width="1.3" height="11.0" fill="#aeaeaa" />
<rect x="1460.2" y="368.5" width="1.3" height="11.0" fill="#aeaeaa" />
<rect x="1449.5" y="368.0" width="15.0" height="1.6" fill="#bcbcb8" />
<rect x="1470.0" y="370.0" width="9.0" height="14.0" fill="#747472" />
<rect x="1470.6" y="371.5" width="1.3" height="12.0" fill="#aeaeaa" />
<rect x="1473.0" y="371.5" width="1.3" height="12.0" fill="#aeaeaa" />
<rect x="1475.4" y="371.5" width="1.3" height="12.0" fill="#aeaeaa" />
<rect x="1469.5" y="371.0" width="10.0" height="1.6" fill="#bcbcb8" />
<rect x="1370.0" y="355.0" width="9.0" height="12.0" fill="#4c4c4c" />
</g><!--END BLD-->
</svg>

<!-- RIGHT TOOLBAR -->
<svg class="a" style="left:0;top:0" width="1830" height="782" viewBox="0 0 1830 782">
<rect x="1795" y="37" width="35" height="740" fill="#555"/>
<rect x="1795" y="128.5" width="35" height="1.6" fill="#363636"/>
<rect x="1795" y="398" width="35" height="1.6" fill="#363636"/>
<rect x="1795" y="447" width="35" height="1.6" fill="#363636"/>
<rect x="1795" y="627.5" width="35" height="1.8" fill="#363636"/>
<rect x="1795" y="720.5" width="35" height="1.8" fill="#363636"/>
<rect x="1797" y="637" width="32" height="31" fill="#888"/>
<rect x="1797" y="681" width="32" height="32" fill="#888"/>
<g fill="none" stroke="#e2e2e2" stroke-width="1.5" stroke-linecap="round" stroke-linejoin="round">
<path d="M1810.5 66.6 H1806 C1803.3 66.6 1801.8 64.5 1801.8 62 C1801.8 59.5 1803.5 57.6 1806 57.4 C1806.2 53.2 1809.3 50.3 1813.3 50.3 C1817.3 50.3 1820.3 53.2 1820.6 57.4 C1823.2 57.6 1825 59.5 1825 62 C1825 64.5 1823.3 66.6 1820.8 66.6 H1816.2"/>
<path d="M1813.3 55.3 V72.5 M1808.2 60.2 L1813.3 63.6 M1818 62.2 L1813.3 66"/>
<path d="M1808.5 109.6 H1800.5 V92.6 H1823.6 V100"/>
<path d="M1804.8 112.2 H1807.5 V109.6"/>
<path d="M1810.5 105 V101.6 H1814 M1822.5 101.6 H1826 V105 M1826 114.5 V117.8 H1822.5 M1814 117.8 H1810.5 V114.5"/>
<rect x="1803" y="150.4" width="19.6" height="6.2" stroke-width="1.3"/>
<path d="M1803 158.6 H1822.6" stroke-width="1.3"/>
<path d="M1806 153.5 V156.5 M1808.5 154.5 V156.5 M1811 153.5 V156.5 M1813.5 154.5 V156.5 M1816 153.5 V156.5 M1818.5 154.5 V156.5 M1821 153.5 V156.5" stroke-width="1" stroke-linecap="butt"/>
<path d="M1799.3 200.3 L1807 193.8 H1826.5 L1818.4 200.3 Z" stroke-width="1.3"/>
<rect x="1801.2" y="236" width="17.2" height="16.7" stroke-width="1.3"/>
<path d="M1807.5 236 V231 H1824.9 V247.8 H1818.4 M1801.2 236 L1807.5 231 M1818.4 236 L1824.9 231 M1818.4 252.7 L1824.9 247.8 M1801.2 252.7 L1807.5 247.8" stroke-width="1.3"/>
<path d="M1807.5 231 V247.8" stroke-width="1.1"/>
<path d="M1803 275.3 H1824.8 V295 H1799.6 V279 Z" stroke-width="1.4"/>
<path d="M1811.3 276 V294.5 M1800 284.3 H1824.5" stroke-width="1.3" stroke-dasharray="2.2 1.5"/>
<path d="M1818.5 295 V292 H1824.8" stroke-width="1.3"/>
<circle cx="1812.9" cy="330.1" r="8.3" stroke-width="2.2"/>
<path d="M1812.9 319.3 V321.5 M1812.9 338.7 V340.9 M1802.1 330.1 H1804.3 M1821.5 330.1 H1823.7" stroke-width="2.2"/>
<circle cx="1812.9" cy="374.1" r="12.8" stroke-width="1.3"/>
<path d="M1807 380.7 V367.6 C1810 366.5 1812 367 1814 368.3 C1816.5 369.5 1818.5 369.8 1821.2 368.8 V376.2 C1818.5 377 1816.5 376.7 1814 375.4 C1812 374.3 1810 374 1807 375.1" stroke-width="1.3"/>
<path d="M1799.9 426 L1826.5 410.9 M1799.9 435.3 L1826.5 420.7 M1800.5 421.7 L1817.8 431.5 M1808.6 416.3 L1826.5 425.5" stroke-width="1.2"/>
</g>
<rect x="1800.8" y="184" width="0" height="0"/>
<polygon points="1808,192 1817.8,184 1817.8,204 1808,211.7" fill="#e2e2e2"/>
<path d="M1799.3 200.3 L1807 193.8 H1826.5 L1818.4 200.3 Z" fill="none" stroke="#e2e2e2" stroke-width="1.3"/>
<rect x="1810.3" y="232" width="4.6" height="20" fill="#e2e2e2"/>
<polygon points="1798.8,164.3 1802.6,167.8 1798.8,167.8" fill="#f0f0f0"/>
<path d="M1800.5 279 L1803 275.3 V279 Z" fill="#e2e2e2"/>
<path d="M1824.8 277 H1826.5 V296.7 H1801.5 V295" fill="none" stroke="#e2e2e2" stroke-width="1.4"/>
<polygon points="1817.80,114.40 1813.82,112.10 1813.82,107.50 1817.80,105.20 1821.78,107.50 1821.78,112.10" fill="#e2e2e2"/>
<circle cx="1812.9" cy="330.1" r="3.9" fill="#e2e2e2"/>
<text x="1801.5" y="420" font-family="Liberation Sans" font-size="6.5" fill="#e2e2e2" text-anchor="middle">1</text>
<text x="1810.3" y="414.5" font-family="Liberation Sans" font-size="6.5" fill="#e2e2e2" text-anchor="middle">2</text>
<g fill="none" stroke="#ececec" stroke-width="1.2" stroke-dasharray="2 1.6">
<rect x="1801.3" y="460.1" width="23.5" height="23.5"/>
<rect x="1801.3" y="504.3" width="23.5" height="23.3"/>
<rect x="1801.3" y="548.5" width="23.5" height="23.2"/>
<rect x="1801.3" y="592.5" width="23.5" height="23.3"/>
</g>
<g fill="none" stroke="#dadada" stroke-width="1.1" stroke-linejoin="round">
<path d="M1813 465.6 L1818.3 468.6 V474.8 L1813 477.8 L1807.7 474.8 V468.6 Z M1807.7 468.6 L1813 471.6 L1818.3 468.6 M1813 471.6 V477.8"/>
</g>
<path d="M1805.8 515.9 C1808 512 1810.5 510.8 1813.3 510.8 C1816.1 510.8 1818.6 512 1820.9 515.9 C1818.6 519.8 1816.1 521 1813.3 521 C1810.5 521 1808 519.8 1805.8 515.9 Z" fill="#e6e6e6"/>
<circle cx="1813.3" cy="515.9" r="3.2" fill="none" stroke="#555" stroke-width="1.1"/>
<circle cx="1813.3" cy="515.9" r="1.6" fill="#555"/>
<path d="M1805 560 C1807.5 555.8 1810 554.6 1813.3 554.6 C1816.6 554.6 1819.2 555.8 1821.6 560 C1819.2 564.2 1816.6 565.4 1813.3 565.4 C1810 565.4 1807.5 564.2 1805 560 Z" fill="#e6e6e6"/>
<circle cx="1813.3" cy="560" r="3" fill="none" stroke="#555" stroke-width="1"/>
<path d="M1806 553.7 L1819.5 566.7" stroke="#555" stroke-width="2.4"/>
<path d="M1806 553.7 L1819.5 566.7" stroke="#e6e6e6" stroke-width="1.1"/>
<rect x="1811" y="601.8" width="16" height="15.8" fill="#e0e0e0"/>
<path d="M1814.6 605.6 L1823.4 613.8 M1823.4 605.6 L1814.6 613.8" stroke="#333" stroke-width="1"/>
<polygon points="1803.2,646 1813,642.5 1822.7,645.7 1813,649.2" fill="#6e6e6e" stroke="#e0e0e0" stroke-width="1.2" stroke-linejoin="round"/>
<polygon points="1803.2,646 1813,649.2 1812.4,663.8 1804.8,658" fill="#e0e0e0" stroke="#e0e0e0" stroke-width="1.2" stroke-linejoin="round"/>
<polygon points="1822.7,645.7 1813,649.2 1812.4,663.8 1821.5,658" fill="#8c8c8c" stroke="#e0e0e0" stroke-width="1.2" stroke-linejoin="round"/>
<g fill="none" stroke="#e6e6e6" stroke-width="2">
<ellipse cx="1813" cy="697.3" rx="11.5" ry="5.2"/>
<ellipse cx="1813" cy="697.3" rx="5.2" ry="11"/>
</g>
<path d="M1813 694 V698.5 L1809.5 701.5 M1813 698.5 L1816.5 701.5" fill="none" stroke="#e6e6e6" stroke-width="0.9"/>
</svg>

</body></html>
